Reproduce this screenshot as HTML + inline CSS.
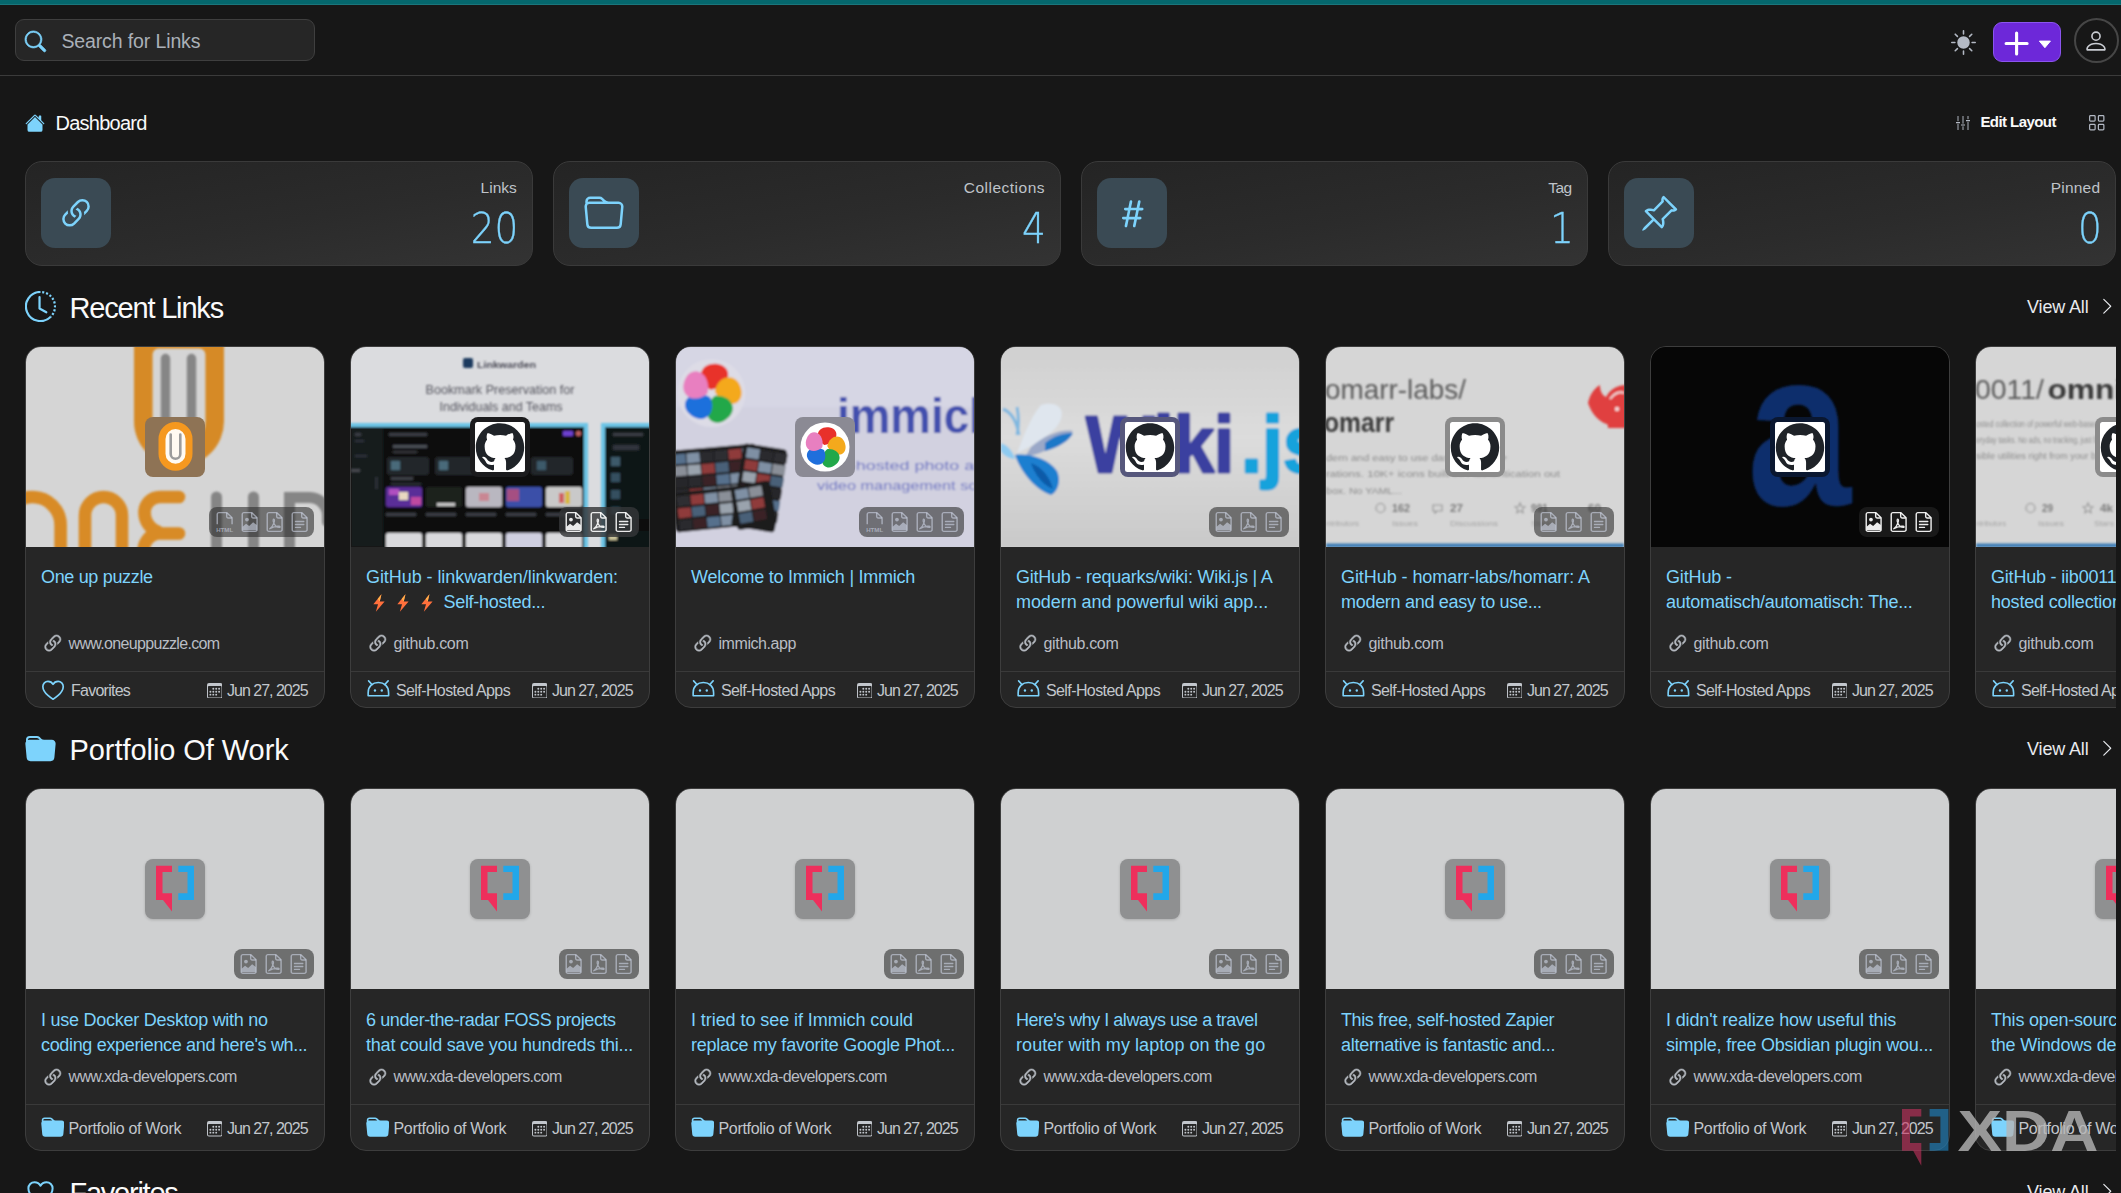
<!DOCTYPE html>
<html lang="en"><head><meta charset="utf-8"><title>Dashboard - Linkwarden</title>
<style>
html,body{margin:0;padding:0;background:#171717;}
body{width:2121px;height:1193px;overflow:hidden;position:relative;font-family:"Liberation Sans",sans-serif;}
#root{position:absolute;left:0;top:0;width:2121px;height:1193px;overflow:hidden;background:#171717;}
.a{position:absolute;display:block;}
.t{position:absolute;white-space:nowrap;line-height:1;}
.card{background:#262626;border:1px solid #3d3d3d;border-radius:16px;box-sizing:border-box;overflow:hidden;}
.num{font-family:"DejaVu Sans","Liberation Sans",sans-serif;font-weight:200;}
</style></head>
<body><div id="root">
<div class="a" style="left:0px;top:0px;width:2121px;height:4.6px;background:#05676d;"></div>
<div class="a" style="left:0px;top:4px;width:2121px;height:1px;background:#2b8489;opacity:.55;"></div>
<div class="a" style="left:15px;top:19px;width:300px;height:42px;background:#262626;border:1px solid #3f3f3f;border-radius:9px;box-sizing:border-box;"></div>
<svg class="a" style="left:24.6px;top:30.9px;overflow:visible;" width="20.8" height="20.8" viewBox="0 0 16 16"><g fill="#7dd3fc" stroke="#7dd3fc" stroke-width="0.55" stroke-linejoin="round"><path d="M11.742 10.344a6.5 6.5 0 1 0-1.397 1.398h-.001q.044.06.098.115l3.85 3.85a1 1 0 0 0 1.415-1.414l-3.85-3.85a1 1 0 0 0-.115-.1zM12 6.5a5.5 5.5 0 1 1-11 0 5.5 5.5 0 0 1 11 0"/></g></svg>
<span id="t0" class="t " style="top:32.39px;font-size:19.5px;color:#aab0b8;left:61.40px;letter-spacing:-0.120px;">Search for Links</span>
<div class="a" style="left:0px;top:75px;width:2121px;height:1px;background:#3b3b3b;"></div>
<svg class="a" style="left:1950.5px;top:30px;" width="25" height="25" viewBox="0 0 16 16"><g fill="#b3b9c4"><path d="M8 12a4 4 0 1 0 0-8 4 4 0 0 0 0 8M8 0a.5.5 0 0 1 .5.5v2a.5.5 0 0 1-1 0v-2A.5.5 0 0 1 8 0m0 13a.5.5 0 0 1 .5.5v2a.5.5 0 0 1-1 0v-2A.5.5 0 0 1 8 13m8-5a.5.5 0 0 1-.5.5h-2a.5.5 0 0 1 0-1h2a.5.5 0 0 1 .5.5M3 8a.5.5 0 0 1-.5.5h-2a.5.5 0 0 1 0-1h2A.5.5 0 0 1 3 8m10.657-5.657a.5.5 0 0 1 0 .707l-1.414 1.415a.5.5 0 1 1-.707-.708l1.414-1.414a.5.5 0 0 1 .707 0m-9.193 9.193a.5.5 0 0 1 0 .707L3.05 13.657a.5.5 0 0 1-.707-.707l1.414-1.414a.5.5 0 0 1 .707 0m9.193 2.121a.5.5 0 0 1-.707 0l-1.414-1.414a.5.5 0 0 1 .707-.707l1.414 1.414a.5.5 0 0 1 0 .707M4.464 4.465a.5.5 0 0 1-.707 0L2.343 3.05a.5.5 0 1 1 .707-.707l1.414 1.414a.5.5 0 0 1 0 .708"/></g></svg>
<div class="a" style="left:1993px;top:22px;width:68px;height:40px;background:#6d28d9;border:1px solid #8b55ee;border-radius:9px;box-sizing:border-box;"></div>
<svg class="a" style="left:2003px;top:30px;" width="50" height="26" viewBox="0 0 50 26"><path d="M3.100 13.500h21M13.600 3v21" stroke="#fff" stroke-width="3.100" stroke-linecap="round"/><path d="M36.400 11.100h11l-5.500 6.600z" fill="#fff" stroke="#fff" stroke-width="1" stroke-linejoin="round"/></svg>
<div class="a" style="left:2073.5px;top:17.5px;width:45px;height:45px;border:2px solid #464646;border-radius:50%;box-sizing:border-box;"></div>
<svg class="a" style="left:2083.3px;top:28.4px;" width="26" height="26" viewBox="0 0 16 16"><g fill="#c9ccd2"><path d="M8 8a3 3 0 1 0 0-6 3 3 0 0 0 0 6m2-3a2 2 0 1 1-4 0 2 2 0 0 1 4 0m4 8c0 1-1 1-1 1H3s-1 0-1-1 1-4 6-4 6 3 6 4m-1-.004c-.001-.246-.154-.986-.832-1.664C11.516 10.68 10.289 10 8 10s-3.516.68-4.168 1.332c-.678.678-.83 1.418-.832 1.664z"/></g></svg>
<svg class="a" style="left:25px;top:112.5px;" width="20" height="20" viewBox="0 0 16 16"><g fill="#7dd3fc"><path d="M8.707 1.5a1 1 0 0 0-1.414 0L.646 8.146a.5.5 0 0 0 .708.708L8 2.207l6.646 6.647a.5.5 0 0 0 .708-.708L13 5.793V2.5a.5.5 0 0 0-.5-.5h-1a.5.5 0 0 0-.5.5v1.293z"/><path d="m8 3.293 6 6V13.5a1.5 1.5 0 0 1-1.500 1.500h-9A1.500 1.500 0 0 1 2 13.500V9.293z"/></g></svg>
<span id="t1" class="t " style="top:112.57px;font-size:20px;color:#fafafa;left:55.50px;letter-spacing:-0.750px;">Dashboard</span>
<svg class="a" style="left:1954.5px;top:114.5px;" width="16" height="16" viewBox="0 0 16 16"><g stroke="#b3b9c4" stroke-width=".95" fill="none" stroke-linecap="butt"><path d="M3 1v5.2M3 8.8V15M8 1v7.7M8 11.3V15M13 1v3.2M13 6.8V15"/><path d="M1 7.6h4M6 10h4M11 5.600h4" stroke-width="1.2"/></g></svg>
<span id="t2" class="t " style="top:114.30px;font-size:15px;color:#fafafa;left:1980.40px;font-weight:700;letter-spacing:-0.560px;">Edit Layout</span>
<svg class="a" style="left:2087.5px;top:113.5px;" width="17.5" height="17.5" viewBox="0 0 16 16"><g stroke="#b3b9c4" stroke-width="1.1" fill="none"><rect x="1.5" y="1.5" width="5" height="5" rx=".8"/><rect x="9.5" y="1.5" width="5" height="5" rx=".8"/><rect x="1.5" y="9.5" width="5" height="5" rx=".8"/><rect x="9.5" y="9.5" width="5" height="5" rx=".8"/></g></svg>
<div class="a" style="left:25px;top:161px;width:507.75px;height:104.5px;background:linear-gradient(170deg,#242424 0%,#2b2b2b 55%,#333 100%);border:1px solid #3a3a3a;border-radius:17px;box-sizing:border-box;"></div>
<div class="a" style="left:41px;top:178px;width:70px;height:70px;background:#3a4a54;border-radius:14px;"></div>
<svg class="a" style="left:56.2px;top:194px;" width="40" height="40" viewBox="0 0 16 16"><g fill="#7dd3fc"><path d="M4.715 6.542 3.343 7.914a3 3 0 1 0 4.243 4.243l1.828-1.829A3 3 0 0 0 8.586 5.5L8 6.086a1 1 0 0 0-.154.199 2 2 0 0 1 .861 3.337L6.880 11.450a2 2 0 1 1-2.830-2.830l.793-.792a4 4 0 0 1-.128-1.287z"/><path d="M6.586 4.672A3 3 0 0 0 7.414 9.500l.775-.776a2 2 0 0 1-.896-3.346L9.120 3.550a2 2 0 1 1 2.830 2.830l-.793.792c.112.420.155.855.128 1.287l1.372-1.372a3 3 0 1 0-4.243-4.243z"/></g></svg>
<span id="t3" class="t " style="top:179.88px;font-size:15.5px;color:#bfc3c9;right:1604.25px;">Links</span>
<span id="t4" class="t num" style="top:207.18px;font-size:43.5px;color:#7dd3fc;right:1602.75px;transform:scaleX(.86);-webkit-text-stroke:.35px #7dd3fc;transform-origin:100% 50%;">20</span>
<div class="a" style="left:552.75px;top:161px;width:507.75px;height:104.5px;background:linear-gradient(170deg,#242424 0%,#2b2b2b 55%,#333 100%);border:1px solid #3a3a3a;border-radius:17px;box-sizing:border-box;"></div>
<div class="a" style="left:568.75px;top:178px;width:70px;height:70px;background:#3a4a54;border-radius:14px;"></div>
<svg class="a" style="left:583.95px;top:194px;" width="40" height="40" viewBox="0 0 16 16"><g fill="#7dd3fc"><path d="M.54 3.87.5 3a2 2 0 0 1 2-2h3.672a2 2 0 0 1 1.414.586l.828.828A2 2 0 0 0 9.828 3h3.982a2 2 0 0 1 1.992 2.181l-.637 7A2 2 0 0 1 13.174 14H2.826a2 2 0 0 1-1.991-1.819l-.637-7a2 2 0 0 1 .342-1.310zM2.190 4a1 1 0 0 0-.996 1.090l.637 7a1 1 0 0 0 .995.910h10.348a1 1 0 0 0 .995-.910l.637-7A1 1 0 0 0 13.810 4zm4.690-1.707A1 1 0 0 0 6.172 2H2.500a1 1 0 0 0-1 .981l.006.139q.323-.119.684-.120h5.396z"/></g></svg>
<span id="t5" class="t " style="top:179.88px;font-size:15.5px;color:#bfc3c9;right:1076.00px;letter-spacing:0.500px;">Collections</span>
<span id="t6" class="t num" style="top:207.18px;font-size:43.5px;color:#7dd3fc;right:1075.00px;transform:scaleX(.86);-webkit-text-stroke:.35px #7dd3fc;transform-origin:100% 50%;">4</span>
<div class="a" style="left:1080.5px;top:161px;width:507.75px;height:104.5px;background:linear-gradient(170deg,#242424 0%,#2b2b2b 55%,#333 100%);border:1px solid #3a3a3a;border-radius:17px;box-sizing:border-box;"></div>
<div class="a" style="left:1096.5px;top:178px;width:70px;height:70px;background:#3a4a54;border-radius:14px;"></div>
<svg class="a" style="left:1111.7px;top:194px;" width="40" height="40" viewBox="0 0 16 16"><g fill="#7dd3fc"><path d="M8.390 12.648a1 1 0 0 0-.015.180c0 .305.210.508.500.508.266 0 .492-.172.555-.477l.554-2.703h1.204c.421 0 .617-.234.617-.547 0-.312-.188-.530-.617-.530h-.985l.516-2.524h1.265c.430 0 .618-.227.618-.547 0-.313-.188-.524-.618-.524h-1.046l.476-2.304a1 1 0 0 0 .016-.164.510.510 0 0 0-.516-.516.540.540 0 0 0-.539.430l-.523 2.554H7.617l.477-2.304c.008-.040.015-.118.015-.164a.510.510 0 0 0-.523-.516.540.540 0 0 0-.531.430L6.530 5.484H5.414c-.430 0-.617.220-.617.532s.187.539.617.539h.906l-.515 2.523H4.609c-.421 0-.609.219-.609.531s.188.547.610.547h.976l-.516 2.492c-.008.040-.015.125-.015.180 0 .305.210.508.500.508.265 0 .492-.172.554-.477l.555-2.703h2.242zm-1-6.109h2.266l-.515 2.563H6.859l.532-2.563z"/></g></svg>
<span id="t7" class="t " style="top:179.88px;font-size:15.5px;color:#bfc3c9;right:549.25px;letter-spacing:-0.500px;">Tag</span>
<span id="t8" class="t num" style="top:207.18px;font-size:43.5px;color:#7dd3fc;right:547.25px;transform:scaleX(.86);-webkit-text-stroke:.35px #7dd3fc;transform-origin:100% 50%;">1</span>
<div class="a" style="left:1608.25px;top:161px;width:507.75px;height:104.5px;background:linear-gradient(170deg,#242424 0%,#2b2b2b 55%,#333 100%);border:1px solid #3a3a3a;border-radius:17px;box-sizing:border-box;"></div>
<div class="a" style="left:1624.25px;top:178px;width:70px;height:70px;background:#3a4a54;border-radius:14px;"></div>
<svg class="a" style="left:1639.45px;top:194px;" width="40" height="40" viewBox="0 0 16 16"><g fill="#7dd3fc"><path d="M9.828.722a.5.5 0 0 1 .354.146l4.950 4.950a.5.5 0 0 1 0 .707c-.480.480-1.072.588-1.503.588-.177 0-.335-.018-.460-.039l-3.134 3.134a6 6 0 0 1 .160 1.013c.046.702-.032 1.687-.720 2.375a.5.5 0 0 1-.707 0l-2.829-2.828-3.182 3.182c-.195.195-1.219.902-1.414.707s.512-1.220.707-1.414l3.182-3.182-2.828-2.829a.5.5 0 0 1 0-.707c.688-.688 1.673-.767 2.375-.720a6 6 0 0 1 1.013.160l3.134-3.133a3 3 0 0 1-.040-.461c0-.430.108-1.022.589-1.503a.5.5 0 0 1 .353-.146m.122 2.112v-.002zm0-.002v.002a.5.5 0 0 1-.122.510L6.293 6.878a.5.5 0 0 1-.511.120H5.780l-.014-.004a5 5 0 0 0-.288-.076 5 5 0 0 0-.765-.116c-.422-.028-.836.008-1.175.150l5.510 5.509c.141-.340.177-.753.149-1.175a5 5 0 0 0-.192-1.054l-.004-.013v-.001a.5.5 0 0 1 .120-.512l3.536-3.535a.5.5 0 0 1 .532-.115l.096.022c.087.017.208.034.344.034q.172.002.343-.040L9.927 2.028q-.042.172-.040.343a1.800 1.800 0 0 0 .062.460z"/></g></svg>
<span id="t9" class="t " style="top:179.88px;font-size:15.5px;color:#bfc3c9;right:20.80px;letter-spacing:0.200px;">Pinned</span>
<span id="t10" class="t num" style="top:207.18px;font-size:43.5px;color:#7dd3fc;right:19.50px;transform:scaleX(.86);-webkit-text-stroke:.35px #7dd3fc;transform-origin:100% 50%;">0</span>
<svg class="a" style="left:24.5px;top:291px;" width="31" height="31" viewBox="0 0 16 16"><g fill="none" stroke="#7dd3fc" stroke-width="1.150" stroke-linecap="butt"><path d="M8 .5A7.500 7.500 0 1 0 13.300 13.300"/><path d="M8 .5A7.500 7.500 0 0 1 13.300 13.300" stroke-dasharray="1.05 1.0" stroke-dashoffset="-0.9"/><path d="M7.500 3.200V9l3.500 2" stroke-linecap="round" stroke-linejoin="round"/></g></svg>
<span id="t11" class="t " style="top:294.45px;font-size:29px;color:#fafafa;left:69.50px;letter-spacing:-1.182px;">Recent Links</span>
<span id="t12" class="t " style="top:297.51px;font-size:18px;color:#e8eaee;left:2027.00px;letter-spacing:-0.142px;">View All</span>
<svg class="a" style="left:2098.3px;top:297.3px;" width="18.5" height="18.5" viewBox="0 0 16 16"><g fill="#e8eaee"><path d="M4.646 1.646a.5.5 0 0 1 .708 0l6 6a.5.5 0 0 1 0 .708l-6 6a.5.5 0 0 1-.708-.708L10.293 8 4.646 2.354a.5.5 0 0 1 0-.708"/></g></svg>
<svg class="a" style="left:24.6px;top:733.8px;" width="31" height="31" viewBox="0 0 16 16"><g fill="#7dd3fc"><path d="M9.828 3h3.982a2 2 0 0 1 1.992 2.181l-.637 7A2 2 0 0 1 13.174 14H2.825a2 2 0 0 1-1.991-1.819l-.637-7a2 2 0 0 1 .342-1.310L.5 3a2 2 0 0 1 2-2h3.672a2 2 0 0 1 1.414.586l.828.828A2 2 0 0 0 9.828 3m-8.322.120q.322-.119.684-.120h5.396l-.707-.707A1 1 0 0 0 6.172 2H2.500a1 1 0 0 0-1 .981z"/></g></svg>
<span id="t13" class="t " style="top:736.45px;font-size:29px;color:#fafafa;left:69.50px;letter-spacing:-0.062px;">Portfolio Of Work</span>
<span id="t14" class="t " style="top:739.51px;font-size:18px;color:#e8eaee;left:2027.00px;letter-spacing:-0.142px;">View All</span>
<svg class="a" style="left:2098.3px;top:739.3px;" width="18.5" height="18.5" viewBox="0 0 16 16"><g fill="#e8eaee"><path d="M4.646 1.646a.5.5 0 0 1 .708 0l6 6a.5.5 0 0 1 0 .708l-6 6a.5.5 0 0 1-.708-.708L10.293 8 4.646 2.354a.5.5 0 0 1 0-.708"/></g></svg>
<svg class="a" style="left:24.6px;top:1176.5px;" width="31" height="31" viewBox="0 0 32 32"><path d="M16 27.200C16 27.200 3.500 20.300 3.500 11.700A6.300 6.300 0 0 1 9.800 5.400c2.700 0 5 1.400 6.200 3.600 1.200-2.200 3.500-3.600 6.200-3.600a6.300 6.300 0 0 1 6.300 6.300C28.500 20.300 16 27.200 16 27.200z" fill="none" stroke="#7dd3fc" stroke-width="2.050" stroke-linejoin="round"/></svg>
<span id="t15" class="t " style="top:1179.45px;font-size:29px;color:#fafafa;left:69.50px;letter-spacing:-1.250px;">Favorites</span>
<span id="t16" class="t " style="top:1182.51px;font-size:18px;color:#e8eaee;left:2027.00px;letter-spacing:-0.142px;">View All</span>
<svg class="a" style="left:2098.3px;top:1182.3px;" width="18.5" height="18.5" viewBox="0 0 16 16"><g fill="#e8eaee"><path d="M4.646 1.646a.5.5 0 0 1 .708 0l6 6a.5.5 0 0 1 0 .708l-6 6a.5.5 0 0 1-.708-.708L10.293 8 4.646 2.354a.5.5 0 0 1 0-.708"/></g></svg>
<div class="a card" style="left:25px;top:346px;width:300px;height:361.5px;"><div class="a" style="left:0;top:0;width:298px;height:200px;overflow:hidden;"><svg width="298" height="200" viewBox="0 0 298 200" style="display:block;background:#d5d5d5"><defs><filter id="b1" x="-5%" y="-5%" width="110%" height="110%"><feGaussianBlur stdDeviation="1"/></filter></defs><g filter="url(#b1)"><path fill-rule="evenodd" fill="#d68a25" d="M108-20H198V74.300A45 45 0 0 1 108 74.300ZM132.600 1.500A6 6 0 0 0 126.600 7.500V74.200A26.400 26.400 0 0 0 179.400 74.200V7.500A6 6 0 0 0 173.400 1.500Z"/><path d="M139.500 11.500v80M165.500 11.500v80" stroke="#868686" stroke-width="9.400" stroke-linecap="round"/><g fill="none" stroke="#d88b26" stroke-width="12.600" stroke-linecap="round" stroke-linejoin="round"><path d="M-21.400 215v-37a28 28 0 0 1 56 0v37"/><path d="M59 215v-46.500a18.500 18.500 0 0 1 37 0v46.500"/><path d="M153 150h-19a15.500 15.500 0 0 0-15.500 15.500c0 9 6 17 14 19.500M153 186.500h-22c-9 2-13.500 10-13.500 18v12"/></g><g fill="none" stroke="#858585" stroke-width="11" stroke-linecap="round"><path d="M190.500 150v62M227.500 150v62M263.500 215v-64.500h20a18 18 0 0 1 18 18v6"/></g></g></svg></div></div>
<div class="a" style="left:145px;top:416.5px;width:60px;height:60px;border-radius:8px;background:#8e7355;"><svg class="a" style="left:5px;top:5px" width="50" height="50" viewBox="0 0 50 50"><rect x="12" y="3.500" width="27" height="41.700" rx="13.500" fill="#fffaf2" stroke="#f5981f" stroke-width="7"/><path d="M20.700 12.500v19.500a4.800 4.800 0 0 0 9.600 0V12.500" fill="none" stroke="#9c9c9c" stroke-width="2.600" stroke-linecap="round"/></svg></div>
<div class="a" style="left:209.4px;top:506.9px;width:104.5px;height:29.8px;background:rgba(43,43,43,.59);border-radius:8px;"></div>
<svg class="a" style="left:214.8px;top:511.2px;" width="19.3" height="22" viewBox="0 0 17.500 20"><path d="M3.500 1.500h7.300l4.700 4.700V12M2 12V3a1.500 1.500 0 0 1 1.500-1.500" fill="none" stroke="rgba(215,222,240,.55)" stroke-width="1.300" stroke-linejoin="round"/><path d="M10.600 1.700v3.400a1.200 1.200 0 0 0 1.200 1.200h3.500" fill="none" stroke="rgba(215,222,240,.55)" stroke-width="1.300"/><text x="8.800" y="19.300" text-anchor="middle" font-family="Liberation Sans, sans-serif" font-size="5.600" font-weight="700" fill="rgba(215,222,240,.55)" textLength="15.500" lengthAdjust="spacingAndGlyphs">HTML</text></svg>
<svg class="a" style="left:239.8px;top:511.2px;" width="19.3" height="22" viewBox="0 0 17.500 20"><path d="M3.500 1.500h7.300l4.700 4.700V17a1.500 1.500 0 0 1-1.500 1.500h-10.500A1.500 1.500 0 0 1 2 17V3a1.500 1.500 0 0 1 1.500-1.500z" fill="none" stroke="rgba(215,222,240,.55)" stroke-width="1.300" stroke-linejoin="round"/><path d="M10.600 1.700v3.400a1.200 1.200 0 0 0 1.200 1.200h3.500" fill="none" stroke="rgba(215,222,240,.55)" stroke-width="1.300"/><circle cx="6.300" cy="7.800" r="1.700" fill="rgba(215,222,240,.55)"/><path d="M2.300 17.600v-3.300l3.200-2.700 2.800 2 3.600-3.400 3.400 2.600v4.800z" fill="rgba(215,222,240,.55)"/></svg>
<svg class="a" style="left:264.8px;top:511.2px;" width="19.3" height="22" viewBox="0 0 17.500 20"><path d="M3.500 1.500h7.300l4.700 4.700V17a1.500 1.500 0 0 1-1.500 1.500h-10.500A1.500 1.500 0 0 1 2 17V3a1.500 1.500 0 0 1 1.500-1.500z" fill="none" stroke="rgba(215,222,240,.55)" stroke-width="1.300" stroke-linejoin="round"/><path d="M10.600 1.700v3.400a1.200 1.200 0 0 0 1.200 1.200h3.500" fill="none" stroke="rgba(215,222,240,.55)" stroke-width="1.300"/><path d="M4.300 16.200c1.500-1 3.200-3.700 4-6 .5-1.500.4-2.900-.3-2.900s-.9 1.300-.3 2.900c.8 2.200 2.900 4.600 5.300 4.700 1 .05 1-.9 0-1.100-2-.4-6 .700-8.700 2.400z" fill="none" stroke="rgba(215,222,240,.55)" stroke-width="1.100" stroke-linejoin="round"/></svg>
<svg class="a" style="left:289.8px;top:511.2px;" width="19.3" height="22" viewBox="0 0 17.500 20"><path d="M3.500 1.500h7.300l4.700 4.700V17a1.500 1.500 0 0 1-1.500 1.500h-10.500A1.500 1.500 0 0 1 2 17V3a1.500 1.500 0 0 1 1.500-1.500z" fill="none" stroke="rgba(215,222,240,.55)" stroke-width="1.300" stroke-linejoin="round"/><path d="M10.600 1.700v3.400a1.200 1.200 0 0 0 1.200 1.200h3.500" fill="none" stroke="rgba(215,222,240,.55)" stroke-width="1.300"/><path d="M5 9.500h7.500M5 12.200h7.500M5 14.900h4.500" stroke="rgba(215,222,240,.55)" stroke-width="1.300" stroke-linecap="round"/></svg>
<span id="t17" class="t " style="top:568.26px;font-size:18px;color:#7dd3fc;left:41.00px;letter-spacing:-0.333px;">One up puzzle</span>
<svg class="a" style="left:40.7px;top:632.1px;" width="23.6" height="23.6" viewBox="0 0 16 16"><g fill="#b4b8bf" stroke="#b4b8bf" stroke-width="0.35" stroke-linejoin="round"><path d="M4.715 6.542 3.343 7.914a3 3 0 1 0 4.243 4.243l1.828-1.829A3 3 0 0 0 8.586 5.5L8 6.086a1 1 0 0 0-.154.199 2 2 0 0 1 .861 3.337L6.880 11.450a2 2 0 1 1-2.830-2.830l.793-.792a4 4 0 0 1-.128-1.287z"/><path d="M6.586 4.672A3 3 0 0 0 7.414 9.500l.775-.776a2 2 0 0 1-.896-3.346L9.120 3.550a2 2 0 1 1 2.830 2.830l-.793.792c.112.420.155.855.128 1.287l1.372-1.372a3 3 0 1 0-4.243-4.243z"/></g></svg>
<span id="t18" class="t " style="top:635.96px;font-size:16px;color:#b9bdc4;left:68.50px;letter-spacing:-0.667px;">www.oneuppuzzle.com</span>
<div class="a" style="left:26px;top:671px;width:298px;height:1px;background:#3a3a3a;"></div>
<svg class="a" style="left:40.25px;top:677.1px;" width="26.1" height="26.1" viewBox="0 0 32 32"><path d="M16 27.200C16 27.200 3.500 20.300 3.500 11.700A6.300 6.300 0 0 1 9.800 5.400c2.700 0 5 1.400 6.200 3.600 1.200-2.200 3.500-3.600 6.200-3.600a6.300 6.300 0 0 1 6.300 6.300C28.500 20.300 16 27.200 16 27.200z" fill="none" stroke="#7dd3fc" stroke-width="2.050" stroke-linejoin="round"/></svg>
<span id="t19" class="t " style="top:682.96px;font-size:16px;color:#c2c6cc;left:71.00px;letter-spacing:-0.750px;">Favorites</span>
<svg class="a" style="left:206.5px;top:682.5px;" width="15.5" height="15.5" viewBox="0 0 16 16"><g fill="#c2c6cc"><path d="M14 0H2a2 2 0 0 0-2 2v12a2 2 0 0 0 2 2h12a2 2 0 0 0 2-2V2a2 2 0 0 0-2-2M1 3.857C1 3.384 1.448 3 2 3h12c.552 0 1 .384 1 .857v10.286c0 .473-.448.857-1 .857H2c-.552 0-1-.384-1-.857z"/><path d="M6.500 7a1 1 0 1 0 0-2 1 1 0 0 0 0 2m3 0a1 1 0 1 0 0-2 1 1 0 0 0 0 2m3 0a1 1 0 1 0 0-2 1 1 0 0 0 0 2m-9 3a1 1 0 1 0 0-2 1 1 0 0 0 0 2m3 0a1 1 0 1 0 0-2 1 1 0 0 0 0 2m3 0a1 1 0 1 0 0-2 1 1 0 0 0 0 2m3 0a1 1 0 1 0 0-2 1 1 0 0 0 0 2m-9 3a1 1 0 1 0 0-2 1 1 0 0 0 0 2m3 0a1 1 0 1 0 0-2 1 1 0 0 0 0 2m3 0a1 1 0 1 0 0-2 1 1 0 0 0 0 2"/></g></svg>
<span id="t20" class="t " style="top:682.96px;font-size:16px;color:#c2c6cc;left:227.00px;letter-spacing:-1.000px;">Jun 27, 2025</span>
<div class="a card" style="left:350px;top:346px;width:300px;height:361.5px;"><div class="a" style="left:0;top:0;width:298px;height:200px;overflow:hidden;"><svg width="298" height="200" viewBox="0 0 298 200" style="display:block;background:#dbdcdf"><defs><filter id="b2" x="-5%" y="-5%" width="110%" height="110%"><feGaussianBlur stdDeviation="1.15"/></filter></defs><g filter="url(#b2)"><rect x="112" y="11" width="10" height="10" rx="2" fill="#1c3a5e"/><text x="126" y="20.500" font-family="Liberation Sans, sans-serif" font-size="9.500" font-weight="700" fill="#4a4a55" textLength="59" lengthAdjust="spacingAndGlyphs">Linkwarden</text><text x="149" y="47" font-family="Liberation Sans, sans-serif" font-size="12.200" fill="#55555e" text-anchor="middle" textLength="149" lengthAdjust="spacingAndGlyphs">Bookmark Preservation for</text><text x="150" y="63.500" font-family="Liberation Sans, sans-serif" font-size="12.200" fill="#55555e" text-anchor="middle" textLength="123" lengthAdjust="spacingAndGlyphs">Individuals and Teams</text><rect x="-6" y="78" width="241" height="140" fill="#0d0e10" stroke="#6cc4e6" stroke-width="4"/><rect x="252" y="78" width="60" height="140" fill="#111214" stroke="#6cc4e6" stroke-width="4"/><rect x="0" y="80" width="32" height="120" fill="#191a1d"/><rect x="38" y="86" width="38" height="3" fill="#3a3d44"/><rect x="42" y="98" width="34" height="3" fill="#4a4d55"/><rect x="42" y="104" width="24" height="2" fill="#34373d"/><rect x="36" y="110" width="42" height="18" rx="3" fill="#23262c"/><rect x="84" y="110" width="42" height="18" rx="3" fill="#23262c"/><rect x="132" y="110" width="42" height="18" rx="3" fill="#23262c"/><rect x="180" y="110" width="42" height="18" rx="3" fill="#23262c"/><rect x="40" y="114" width="9" height="9" fill="#4a6a7a"/><rect x="88" y="114" width="9" height="9" fill="#4a6a7a"/><rect x="186" y="114" width="9" height="9" fill="#3d5a6a"/><rect x="212" y="84" width="10" height="5" rx="1" fill="#6d3fd0"/><rect x="225" y="84" width="5" height="5" rx="2" fill="#c06060"/><rect x="4" y="86" width="6" height="3" fill="#3a3d44"/><rect x="4" y="93" width="9" height="2" fill="#33363c"/><rect x="4" y="108" width="12" height="2" fill="#33363c"/><rect x="0" y="122" width="9" height="3" fill="#44474e"/><rect x="24" y="130" width="3" height="12" fill="#2c2f35"/><rect x="40" y="130" width="22" height="3" fill="#3d4047"/><rect x="40" y="136" width="30" height="2" fill="#2f3238"/><rect x="35" y="140" width="36" height="20" rx="2" fill="#5a2f98"/><rect x="35" y="166" width="30" height="3" fill="#3a3d44"/><rect x="35" y="186" width="36" height="16" rx="2" fill="#d9d9dc"/><rect x="75" y="140" width="36" height="20" rx="2" fill="#1d211d"/><rect x="75" y="166" width="30" height="3" fill="#3a3d44"/><rect x="75" y="186" width="36" height="16" rx="2" fill="#d9d9dc"/><rect x="115" y="140" width="36" height="20" rx="2" fill="#b9b7c0"/><rect x="115" y="166" width="30" height="3" fill="#3a3d44"/><rect x="115" y="186" width="36" height="16" rx="2" fill="#d9d9dc"/><rect x="155" y="140" width="36" height="20" rx="2" fill="#3b4fa8"/><rect x="155" y="166" width="30" height="3" fill="#3a3d44"/><rect x="155" y="186" width="36" height="16" rx="2" fill="#cfcfe0"/><rect x="195" y="140" width="36" height="20" rx="2" fill="#c9c9c9"/><rect x="195" y="166" width="30" height="3" fill="#3a3d44"/><rect x="195" y="186" width="36" height="16" rx="2" fill="#d9d9dc"/><rect x="48" y="145" width="9" height="8" fill="#e8d8c0"/><rect x="38" y="142" width="10" height="6" fill="#b050c0"/><rect x="60" y="150" width="10" height="8" fill="#c048a0"/><rect x="128" y="146" width="10" height="8" fill="#d07080" opacity=".7"/><rect x="156" y="142" width="12" height="12" fill="#c05078" opacity=".8"/><rect x="86" y="156" width="18" height="3" fill="#c8c8c8"/><rect x="214" y="144" width="5" height="13" fill="#d8b840"/><rect x="208" y="146" width="5" height="10" fill="#d06060"/><rect x="262" y="86" width="30" height="3" fill="#3a3d44"/><rect x="262" y="98" width="26" height="5" fill="#33363c"/><rect x="260" y="110" width="9" height="9" fill="#3d5a6a"/><rect x="260" y="126" width="9" height="9" fill="#34505e"/><rect x="260" y="143" width="9" height="9" fill="#34505e"/><rect x="260" y="160" width="9" height="7" fill="#2f4652"/><rect x="258" y="188" width="8" height="5" fill="#c9c39a"/><rect x="285" y="172" width="14" height="12" fill="#0d0d0f"/></g></svg></div></div>
<div class="a" style="left:470px;top:416.5px;width:60px;height:60px;border-radius:8px;background:#1b1b1d;"><svg class="a" style="left:5px;top:5px" width="50" height="50" viewBox="0 0 50 50"><rect width="50" height="50" rx="2.500" fill="#fff"/><g transform="translate(.8 1.200) scale(3.025)"><path d="M8 0C3.580 0 0 3.580 0 8c0 3.540 2.290 6.530 5.470 7.590.4.070.550-.170.550-.380 0-.190-.010-.820-.010-1.490-2.010.370-2.530-.490-2.690-.940-.090-.230-.480-.940-.820-1.130-.280-.150-.680-.520-.010-.530.630-.010 1.080.580 1.230.820.720 1.210 1.870.870 2.330.660.070-.520.280-.870.510-1.070-1.780-.2-3.640-.890-3.640-3.950 0-.870.310-1.590.820-2.150-.080-.2-.360-1.020.080-2.120 0 0 .670-.210 2.200.820.640-.180 1.320-.270 2-.270s1.360.090 2 .270c1.530-1.040 2.200-.820 2.200-.820.440 1.100.160 1.920.080 2.120.510.560.820 1.270.820 2.150 0 3.070-1.870 3.750-3.650 3.950.290.250.540.730.540 1.480 0 1.070-.010 1.930-.010 2.200 0 .210.150.460.550.380A8.010 8.010 0 0 0 16 8c0-4.420-3.580-8-8-8" fill="#1f2328"/></g></svg></div>
<div class="a" style="left:558.9px;top:506.9px;width:80px;height:29.8px;background:rgba(52,54,56,.82);border-radius:8px;"></div>
<svg class="a" style="left:564.3px;top:511.2px;" width="19.3" height="22" viewBox="0 0 17.500 20"><path d="M3.500 1.500h7.300l4.700 4.700V17a1.500 1.500 0 0 1-1.500 1.500h-10.500A1.500 1.500 0 0 1 2 17V3a1.500 1.500 0 0 1 1.500-1.500z" fill="none" stroke="rgba(255,255,255,.9)" stroke-width="1.300" stroke-linejoin="round"/><path d="M10.600 1.700v3.400a1.200 1.200 0 0 0 1.200 1.200h3.500" fill="none" stroke="rgba(255,255,255,.9)" stroke-width="1.300"/><circle cx="6.300" cy="7.800" r="1.700" fill="rgba(255,255,255,.9)"/><path d="M2.300 17.600v-3.300l3.200-2.700 2.800 2 3.600-3.400 3.400 2.600v4.800z" fill="rgba(255,255,255,.9)"/></svg>
<svg class="a" style="left:589.3px;top:511.2px;" width="19.3" height="22" viewBox="0 0 17.500 20"><path d="M3.500 1.500h7.300l4.700 4.700V17a1.500 1.500 0 0 1-1.500 1.500h-10.500A1.500 1.500 0 0 1 2 17V3a1.500 1.500 0 0 1 1.500-1.500z" fill="none" stroke="rgba(255,255,255,.9)" stroke-width="1.300" stroke-linejoin="round"/><path d="M10.600 1.700v3.400a1.200 1.200 0 0 0 1.200 1.200h3.500" fill="none" stroke="rgba(255,255,255,.9)" stroke-width="1.300"/><path d="M4.300 16.200c1.500-1 3.200-3.700 4-6 .5-1.500.4-2.900-.3-2.900s-.9 1.300-.3 2.900c.8 2.200 2.900 4.600 5.300 4.700 1 .05 1-.9 0-1.100-2-.4-6 .700-8.700 2.400z" fill="none" stroke="rgba(255,255,255,.9)" stroke-width="1.100" stroke-linejoin="round"/></svg>
<svg class="a" style="left:614.3px;top:511.2px;" width="19.3" height="22" viewBox="0 0 17.500 20"><path d="M3.500 1.500h7.300l4.700 4.700V17a1.500 1.500 0 0 1-1.500 1.500h-10.500A1.500 1.500 0 0 1 2 17V3a1.500 1.500 0 0 1 1.500-1.500z" fill="none" stroke="rgba(255,255,255,.9)" stroke-width="1.300" stroke-linejoin="round"/><path d="M10.600 1.700v3.400a1.200 1.200 0 0 0 1.200 1.200h3.500" fill="none" stroke="rgba(255,255,255,.9)" stroke-width="1.300"/><path d="M5 9.500h7.500M5 12.200h7.500M5 14.900h4.500" stroke="rgba(255,255,255,.9)" stroke-width="1.300" stroke-linecap="round"/></svg>
<span id="t21" class="t " style="top:568.26px;font-size:18px;color:#7dd3fc;left:366.00px;letter-spacing:-0.067px;">GitHub - linkwarden/linkwarden:</span>
<span id="t22" class="t " style="top:593.26px;font-size:18px;color:#7dd3fc;left:443.50px;letter-spacing:-0.308px;">Self-hosted...</span>
<svg class="a" style="left:365.7px;top:632.1px;" width="23.6" height="23.6" viewBox="0 0 16 16"><g fill="#b4b8bf" stroke="#b4b8bf" stroke-width="0.35" stroke-linejoin="round"><path d="M4.715 6.542 3.343 7.914a3 3 0 1 0 4.243 4.243l1.828-1.829A3 3 0 0 0 8.586 5.5L8 6.086a1 1 0 0 0-.154.199 2 2 0 0 1 .861 3.337L6.880 11.450a2 2 0 1 1-2.830-2.830l.793-.792a4 4 0 0 1-.128-1.287z"/><path d="M6.586 4.672A3 3 0 0 0 7.414 9.500l.775-.776a2 2 0 0 1-.896-3.346L9.120 3.550a2 2 0 1 1 2.830 2.830l-.793.792c.112.420.155.855.128 1.287l1.372-1.372a3 3 0 1 0-4.243-4.243z"/></g></svg>
<span id="t23" class="t " style="top:635.96px;font-size:16px;color:#b9bdc4;left:393.50px;letter-spacing:-0.334px;">github.com</span>
<div class="a" style="left:351px;top:671px;width:298px;height:1px;background:#3a3a3a;"></div>
<svg class="a" style="left:367.25px;top:680.2px;" width="22.75" height="16.6833" viewBox="0 0 24 17.600"><g fill="none" stroke="#7dd3fc" stroke-width="1.700" stroke-linecap="round" stroke-linejoin="round"><path d="M1.200 16.600V13.400C1.200 6.600 6 2.700 12 2.700s10.800 3.900 10.800 10.700v3.200z"/><path d="M1.700 .900l3.500 3.900M22.300 .900l-3.500 3.900"/></g><circle cx="8.400" cy="11.100" r="1.250" fill="#7dd3fc"/><circle cx="15.600" cy="11.100" r="1.250" fill="#7dd3fc"/></svg>
<span id="t24" class="t " style="top:682.96px;font-size:16px;color:#c2c6cc;left:396.00px;letter-spacing:-0.600px;">Self-Hosted Apps</span>
<svg class="a" style="left:531.5px;top:682.5px;" width="15.5" height="15.5" viewBox="0 0 16 16"><g fill="#c2c6cc"><path d="M14 0H2a2 2 0 0 0-2 2v12a2 2 0 0 0 2 2h12a2 2 0 0 0 2-2V2a2 2 0 0 0-2-2M1 3.857C1 3.384 1.448 3 2 3h12c.552 0 1 .384 1 .857v10.286c0 .473-.448.857-1 .857H2c-.552 0-1-.384-1-.857z"/><path d="M6.500 7a1 1 0 1 0 0-2 1 1 0 0 0 0 2m3 0a1 1 0 1 0 0-2 1 1 0 0 0 0 2m3 0a1 1 0 1 0 0-2 1 1 0 0 0 0 2m-9 3a1 1 0 1 0 0-2 1 1 0 0 0 0 2m3 0a1 1 0 1 0 0-2 1 1 0 0 0 0 2m3 0a1 1 0 1 0 0-2 1 1 0 0 0 0 2m3 0a1 1 0 1 0 0-2 1 1 0 0 0 0 2m-9 3a1 1 0 1 0 0-2 1 1 0 0 0 0 2m3 0a1 1 0 1 0 0-2 1 1 0 0 0 0 2m3 0a1 1 0 1 0 0-2 1 1 0 0 0 0 2"/></g></svg>
<span id="t25" class="t " style="top:682.96px;font-size:16px;color:#c2c6cc;left:552.00px;letter-spacing:-1.000px;">Jun 27, 2025</span>
<svg class="a" style="left:371.5px;top:593.5px;" width="13.5" height="18" viewBox="0 0 15 20"><path d="M10.500 .3 1.500 11.400h5.200L4.300 19.800 14 8.200H8.600z" fill="#ff6f3c"/><path d="M10.500 .3 6.300 5.600 8.600 8.200z" fill="#ffb04a"/></svg>
<svg class="a" style="left:395.5px;top:593.5px;" width="13.5" height="18" viewBox="0 0 15 20"><path d="M10.500 .3 1.500 11.400h5.200L4.300 19.800 14 8.200H8.600z" fill="#ff6f3c"/><path d="M10.500 .3 6.300 5.600 8.600 8.200z" fill="#ffb04a"/></svg>
<svg class="a" style="left:419.5px;top:593.5px;" width="13.5" height="18" viewBox="0 0 15 20"><path d="M10.500 .3 1.500 11.400h5.200L4.300 19.800 14 8.200H8.600z" fill="#ff6f3c"/><path d="M10.500 .3 6.300 5.600 8.600 8.200z" fill="#ffb04a"/></svg>
<div class="a card" style="left:675px;top:346px;width:300px;height:361.5px;"><div class="a" style="left:0;top:0;width:298px;height:200px;overflow:hidden;"><svg width="298" height="200" viewBox="0 0 298 200" style="display:block;background:#d0cfde"><defs><filter id="b3" x="-5%" y="-5%" width="110%" height="110%"><feGaussianBlur stdDeviation="1.3"/></filter></defs><g filter="url(#b3)"><rect x="0" y="0" width="298" height="200" fill="#d2d1e0"/><rect x="0" y="0" width="298" height="60" fill="#d9d8e6" opacity=".6"/><circle cx="35.500" cy="46" r="34" fill="#dddce6"/><g transform="translate(35.5 46.5) rotate(8)"><path d="M-1.5 -3.6 C -18.6 -10.5 -16.5 -30.6 3 -30 C 18.6 -28.8 18 -9 -1.5 -3.6 Z" fill="#e8302a"/></g><g transform="translate(35.5 46.5) rotate(80)"><path d="M-1.5 -3.6 C -18.6 -10.5 -16.5 -30.6 3 -30 C 18.6 -28.8 18 -9 -1.5 -3.6 Z" fill="#f4a91c"/></g><g transform="translate(35.5 46.5) rotate(152)"><path d="M-1.5 -3.6 C -18.6 -10.5 -16.5 -30.6 3 -30 C 18.6 -28.8 18 -9 -1.5 -3.6 Z" fill="#22a84a"/></g><g transform="translate(35.5 46.5) rotate(224)"><path d="M-1.5 -3.6 C -18.6 -10.5 -16.5 -30.6 3 -30 C 18.6 -28.8 18 -9 -1.5 -3.6 Z" fill="#1f6fdc"/></g><g transform="translate(35.5 46.5) rotate(296)"><path d="M-1.5 -3.6 C -18.6 -10.5 -16.5 -30.6 3 -30 C 18.6 -28.8 18 -9 -1.5 -3.6 Z" fill="#e87fc0"/></g><text x="161" y="86" font-family="Liberation Sans, sans-serif" font-size="50" font-weight="700" fill="#4350ae" textLength="160" lengthAdjust="spacingAndGlyphs">immich</text><text x="146" y="123" font-family="Liberation Sans, sans-serif" font-size="13" fill="#6a72c2" textLength="172" lengthAdjust="spacingAndGlyphs">self-hosted photo and</text><text x="141" y="143" font-family="Liberation Sans, sans-serif" font-size="13" fill="#6a72c2" textLength="164" lengthAdjust="spacingAndGlyphs">video management sol</text><g transform="translate(-8 104) rotate(-5)"><rect x="0" y="0" width="88" height="56" rx="4" fill="#1b1b1e"/><rect x="4" y="4" width="13" height="10" fill="#56708c"/><rect x="18" y="4" width="13" height="10" fill="#7f90a4"/><rect x="32" y="4" width="13" height="10" fill="#2a2a2e"/><rect x="46" y="4" width="13" height="10" fill="#2e2e33"/><rect x="60" y="4" width="13" height="10" fill="#8f3a3a"/><rect x="74" y="4" width="13" height="10" fill="#7f90a4"/><rect x="4" y="16" width="13" height="10" fill="#8a8f98"/><rect x="18" y="16" width="13" height="10" fill="#9aa3ad"/><rect x="32" y="16" width="13" height="10" fill="#8f3a3a"/><rect x="46" y="16" width="13" height="10" fill="#4a6078"/><rect x="60" y="16" width="13" height="10" fill="#3a2426"/><rect x="74" y="16" width="13" height="10" fill="#9aa3ad"/><rect x="4" y="28" width="13" height="10" fill="#26262a"/><rect x="18" y="28" width="13" height="10" fill="#2a2a2e"/><rect x="32" y="28" width="13" height="10" fill="#3a2426"/><rect x="46" y="28" width="13" height="10" fill="#56708c"/><rect x="60" y="28" width="13" height="10" fill="#7f90a4"/><rect x="74" y="28" width="13" height="10" fill="#2a2a2e"/><rect x="4" y="40" width="13" height="10" fill="#2e2e33"/><rect x="18" y="40" width="13" height="10" fill="#8f3a3a"/><rect x="32" y="40" width="13" height="10" fill="#7f90a4"/><rect x="46" y="40" width="13" height="10" fill="#8a8f98"/><rect x="60" y="40" width="13" height="10" fill="#9aa3ad"/><rect x="74" y="40" width="13" height="10" fill="#8f3a3a"/></g><g transform="translate(-4 146) rotate(-6)"><rect x="0" y="0" width="70" height="40" rx="4" fill="#1b1b1e"/><rect x="4" y="4" width="13" height="10" fill="#2e2e33"/><rect x="18" y="4" width="13" height="10" fill="#8f3a3a"/><rect x="32" y="4" width="13" height="10" fill="#7f90a4"/><rect x="46" y="4" width="13" height="10" fill="#8a8f98"/><rect x="60" y="4" width="13" height="10" fill="#9aa3ad"/><rect x="4" y="16" width="13" height="10" fill="#8f3a3a"/><rect x="18" y="16" width="13" height="10" fill="#4a6078"/><rect x="32" y="16" width="13" height="10" fill="#3a2426"/><rect x="46" y="16" width="13" height="10" fill="#9aa3ad"/><rect x="60" y="16" width="13" height="10" fill="#26262a"/><rect x="4" y="28" width="13" height="10" fill="#2a2a2e"/><rect x="18" y="28" width="13" height="10" fill="#3a2426"/><rect x="32" y="28" width="13" height="10" fill="#56708c"/><rect x="46" y="28" width="13" height="10" fill="#7f90a4"/><rect x="60" y="28" width="13" height="10" fill="#2a2a2e"/></g><g transform="translate(68 96) rotate(9)"><rect x="0" y="0" width="44" height="84" rx="4" fill="#1b1b1e"/><rect x="4" y="4" width="13" height="10" fill="#7f90a4"/><rect x="18" y="4" width="13" height="10" fill="#2a2a2e"/><rect x="32" y="4" width="13" height="10" fill="#2e2e33"/><rect x="4" y="16" width="13" height="10" fill="#8f3a3a"/><rect x="18" y="16" width="13" height="10" fill="#7f90a4"/><rect x="32" y="16" width="13" height="10" fill="#8a8f98"/><rect x="4" y="28" width="13" height="10" fill="#9aa3ad"/><rect x="18" y="28" width="13" height="10" fill="#8f3a3a"/><rect x="32" y="28" width="13" height="10" fill="#4a6078"/><rect x="4" y="40" width="13" height="10" fill="#3a2426"/><rect x="18" y="40" width="13" height="10" fill="#9aa3ad"/><rect x="32" y="40" width="13" height="10" fill="#26262a"/><rect x="4" y="52" width="13" height="10" fill="#2a2a2e"/><rect x="18" y="52" width="13" height="10" fill="#3a2426"/><rect x="32" y="52" width="13" height="10" fill="#56708c"/><rect x="4" y="64" width="13" height="10" fill="#7f90a4"/><rect x="18" y="64" width="13" height="10" fill="#2a2a2e"/><rect x="32" y="64" width="13" height="10" fill="#2e2e33"/></g><g transform="translate(54 140) rotate(-10)"><rect x="0" y="0" width="40" height="44" rx="4" fill="#1b1b1e"/><rect x="4" y="4" width="13" height="10" fill="#7f90a4"/><rect x="18" y="4" width="13" height="10" fill="#8a8f98"/><rect x="4" y="16" width="13" height="10" fill="#9aa3ad"/><rect x="18" y="16" width="13" height="10" fill="#8f3a3a"/><rect x="4" y="28" width="13" height="10" fill="#4a6078"/><rect x="18" y="28" width="13" height="10" fill="#3a2426"/></g></g></svg></div></div>
<div class="a" style="left:795px;top:416.5px;width:60px;height:60px;border-radius:8px;background:#8b8a94;"><svg class="a" style="left:5px;top:5px" width="50" height="50" viewBox="0 0 50 50"><circle cx="25" cy="25" r="24.500" fill="#fff"/><g transform="translate(25 25.5) rotate(8)"><path d="M-1.025 -2.46 C -12.71 -7.175 -11.275 -20.91 2.05 -20.5 C 12.71 -19.68 12.3 -6.15 -1.025 -2.46 Z" fill="#e8302a"/></g><g transform="translate(25 25.5) rotate(80)"><path d="M-1.025 -2.46 C -12.71 -7.175 -11.275 -20.91 2.05 -20.5 C 12.71 -19.68 12.3 -6.15 -1.025 -2.46 Z" fill="#f4a91c"/></g><g transform="translate(25 25.5) rotate(152)"><path d="M-1.025 -2.46 C -12.71 -7.175 -11.275 -20.91 2.05 -20.5 C 12.71 -19.68 12.3 -6.15 -1.025 -2.46 Z" fill="#22a84a"/></g><g transform="translate(25 25.5) rotate(224)"><path d="M-1.025 -2.46 C -12.71 -7.175 -11.275 -20.91 2.05 -20.5 C 12.71 -19.68 12.3 -6.15 -1.025 -2.46 Z" fill="#1f6fdc"/></g><g transform="translate(25 25.5) rotate(296)"><path d="M-1.025 -2.46 C -12.71 -7.175 -11.275 -20.91 2.05 -20.5 C 12.71 -19.68 12.3 -6.15 -1.025 -2.46 Z" fill="#e87fc0"/></g></svg></div>
<div class="a" style="left:859.4px;top:506.9px;width:104.5px;height:29.8px;background:rgba(43,43,43,.59);border-radius:8px;"></div>
<svg class="a" style="left:864.8px;top:511.2px;" width="19.3" height="22" viewBox="0 0 17.500 20"><path d="M3.500 1.500h7.300l4.700 4.700V12M2 12V3a1.500 1.500 0 0 1 1.500-1.500" fill="none" stroke="rgba(215,222,240,.55)" stroke-width="1.300" stroke-linejoin="round"/><path d="M10.600 1.700v3.400a1.200 1.200 0 0 0 1.200 1.200h3.500" fill="none" stroke="rgba(215,222,240,.55)" stroke-width="1.300"/><text x="8.800" y="19.300" text-anchor="middle" font-family="Liberation Sans, sans-serif" font-size="5.600" font-weight="700" fill="rgba(215,222,240,.55)" textLength="15.500" lengthAdjust="spacingAndGlyphs">HTML</text></svg>
<svg class="a" style="left:889.8px;top:511.2px;" width="19.3" height="22" viewBox="0 0 17.500 20"><path d="M3.500 1.500h7.300l4.700 4.700V17a1.500 1.500 0 0 1-1.500 1.500h-10.500A1.500 1.500 0 0 1 2 17V3a1.500 1.500 0 0 1 1.500-1.500z" fill="none" stroke="rgba(215,222,240,.55)" stroke-width="1.300" stroke-linejoin="round"/><path d="M10.600 1.700v3.400a1.200 1.200 0 0 0 1.200 1.200h3.500" fill="none" stroke="rgba(215,222,240,.55)" stroke-width="1.300"/><circle cx="6.300" cy="7.800" r="1.700" fill="rgba(215,222,240,.55)"/><path d="M2.300 17.600v-3.300l3.200-2.700 2.800 2 3.600-3.400 3.400 2.600v4.800z" fill="rgba(215,222,240,.55)"/></svg>
<svg class="a" style="left:914.8px;top:511.2px;" width="19.3" height="22" viewBox="0 0 17.500 20"><path d="M3.500 1.500h7.300l4.700 4.700V17a1.500 1.500 0 0 1-1.500 1.500h-10.500A1.500 1.500 0 0 1 2 17V3a1.500 1.500 0 0 1 1.500-1.500z" fill="none" stroke="rgba(215,222,240,.55)" stroke-width="1.300" stroke-linejoin="round"/><path d="M10.600 1.700v3.400a1.200 1.200 0 0 0 1.200 1.200h3.500" fill="none" stroke="rgba(215,222,240,.55)" stroke-width="1.300"/><path d="M4.300 16.200c1.500-1 3.200-3.700 4-6 .5-1.500.4-2.900-.3-2.900s-.9 1.300-.3 2.900c.8 2.200 2.900 4.600 5.300 4.700 1 .05 1-.9 0-1.100-2-.4-6 .700-8.700 2.400z" fill="none" stroke="rgba(215,222,240,.55)" stroke-width="1.100" stroke-linejoin="round"/></svg>
<svg class="a" style="left:939.8px;top:511.2px;" width="19.3" height="22" viewBox="0 0 17.500 20"><path d="M3.500 1.500h7.300l4.700 4.700V17a1.500 1.500 0 0 1-1.500 1.500h-10.500A1.500 1.500 0 0 1 2 17V3a1.500 1.500 0 0 1 1.500-1.500z" fill="none" stroke="rgba(215,222,240,.55)" stroke-width="1.300" stroke-linejoin="round"/><path d="M10.600 1.700v3.400a1.200 1.200 0 0 0 1.200 1.200h3.500" fill="none" stroke="rgba(215,222,240,.55)" stroke-width="1.300"/><path d="M5 9.500h7.500M5 12.200h7.500M5 14.900h4.500" stroke="rgba(215,222,240,.55)" stroke-width="1.300" stroke-linecap="round"/></svg>
<span id="t26" class="t " style="top:568.26px;font-size:18px;color:#7dd3fc;left:691.00px;letter-spacing:-0.240px;">Welcome to Immich | Immich</span>
<svg class="a" style="left:690.7px;top:632.1px;" width="23.6" height="23.6" viewBox="0 0 16 16"><g fill="#b4b8bf" stroke="#b4b8bf" stroke-width="0.35" stroke-linejoin="round"><path d="M4.715 6.542 3.343 7.914a3 3 0 1 0 4.243 4.243l1.828-1.829A3 3 0 0 0 8.586 5.5L8 6.086a1 1 0 0 0-.154.199 2 2 0 0 1 .861 3.337L6.880 11.450a2 2 0 1 1-2.830-2.830l.793-.792a4 4 0 0 1-.128-1.287z"/><path d="M6.586 4.672A3 3 0 0 0 7.414 9.500l.775-.776a2 2 0 0 1-.896-3.346L9.120 3.550a2 2 0 1 1 2.830 2.830l-.793.792c.112.420.155.855.128 1.287l1.372-1.372a3 3 0 1 0-4.243-4.243z"/></g></svg>
<span id="t27" class="t " style="top:635.96px;font-size:16px;color:#b9bdc4;left:718.50px;letter-spacing:-0.444px;">immich.app</span>
<div class="a" style="left:676px;top:671px;width:298px;height:1px;background:#3a3a3a;"></div>
<svg class="a" style="left:692.25px;top:680.2px;" width="22.75" height="16.6833" viewBox="0 0 24 17.600"><g fill="none" stroke="#7dd3fc" stroke-width="1.700" stroke-linecap="round" stroke-linejoin="round"><path d="M1.200 16.600V13.400C1.200 6.600 6 2.700 12 2.700s10.800 3.900 10.800 10.700v3.200z"/><path d="M1.700 .900l3.500 3.900M22.300 .900l-3.500 3.900"/></g><circle cx="8.400" cy="11.100" r="1.250" fill="#7dd3fc"/><circle cx="15.600" cy="11.100" r="1.250" fill="#7dd3fc"/></svg>
<span id="t28" class="t " style="top:682.96px;font-size:16px;color:#c2c6cc;left:721.00px;letter-spacing:-0.600px;">Self-Hosted Apps</span>
<svg class="a" style="left:856.5px;top:682.5px;" width="15.5" height="15.5" viewBox="0 0 16 16"><g fill="#c2c6cc"><path d="M14 0H2a2 2 0 0 0-2 2v12a2 2 0 0 0 2 2h12a2 2 0 0 0 2-2V2a2 2 0 0 0-2-2M1 3.857C1 3.384 1.448 3 2 3h12c.552 0 1 .384 1 .857v10.286c0 .473-.448.857-1 .857H2c-.552 0-1-.384-1-.857z"/><path d="M6.500 7a1 1 0 1 0 0-2 1 1 0 0 0 0 2m3 0a1 1 0 1 0 0-2 1 1 0 0 0 0 2m3 0a1 1 0 1 0 0-2 1 1 0 0 0 0 2m-9 3a1 1 0 1 0 0-2 1 1 0 0 0 0 2m3 0a1 1 0 1 0 0-2 1 1 0 0 0 0 2m3 0a1 1 0 1 0 0-2 1 1 0 0 0 0 2m3 0a1 1 0 1 0 0-2 1 1 0 0 0 0 2m-9 3a1 1 0 1 0 0-2 1 1 0 0 0 0 2m3 0a1 1 0 1 0 0-2 1 1 0 0 0 0 2m3 0a1 1 0 1 0 0-2 1 1 0 0 0 0 2"/></g></svg>
<span id="t29" class="t " style="top:682.96px;font-size:16px;color:#c2c6cc;left:877.00px;letter-spacing:-1.000px;">Jun 27, 2025</span>
<div class="a card" style="left:1000px;top:346px;width:300px;height:361.5px;"><div class="a" style="left:0;top:0;width:298px;height:200px;overflow:hidden;"><svg width="298" height="200" viewBox="0 0 298 200" style="display:block;background:#d4d4d4"><defs><filter id="b4" x="-5%" y="-5%" width="110%" height="110%"><feGaussianBlur stdDeviation="1.3"/></filter></defs><g filter="url(#b4)"><defs><linearGradient id="wg" x1="0" y1="0" x2="0" y2="1"><stop offset="0" stop-color="#d0d0d0"/><stop offset=".45" stop-color="#dcdcdc"/><stop offset="1" stop-color="#c9c9c9"/></linearGradient></defs><rect width="298" height="200" fill="url(#wg)"/><path d="M2 62c10 4 14 14 16 26M16 60c2 10 2 18 0 28" stroke="#7fb8e0" stroke-width="3" fill="none"/><path d="M40 58c14-4 24 2 20 14-4 12-22 24-44 34 6-14 12-34 24-48z" fill="#dfe6ee"/><path d="M30 100c14-12 30-18 42-16-8 12-28 22-48 26z" fill="#9aa8c8"/><path d="M44 96c10-8 20-10 28-10-4 8-14 14-28 18z" fill="#1c78c8"/><path d="M14 108c14-2 34 4 42 16 4 8 2 20-6 24-14-4-30-22-36-40z" fill="#1a7fd0"/><path d="M30 116c10 4 18 12 22 26-10-4-18-14-22-26z" fill="#0f5aa8"/><path d="M0 96c6 2 12 8 14 16-6 0-12-4-14-8z" fill="#8ecbf0"/><text x="85" y="124.500" font-family="Liberation Sans, sans-serif" font-size="80" font-weight="700" fill="#3b40a0" textLength="148" lengthAdjust="spacingAndGlyphs" stroke="#3b40a0" stroke-width="3" stroke-linejoin="round">Wiki</text><text x="240" y="124.500" font-family="Liberation Sans, sans-serif" font-size="80" font-weight="700" fill="#18a2dc" textLength="84" lengthAdjust="spacingAndGlyphs" stroke="#18a2dc" stroke-width="3" stroke-linejoin="round">.js</text></g></svg></div></div>
<div class="a" style="left:1120px;top:416.5px;width:60px;height:60px;border-radius:8px;background:#56577c;"><svg class="a" style="left:5px;top:5px" width="50" height="50" viewBox="0 0 50 50"><rect width="50" height="50" rx="2.500" fill="#fff"/><g transform="translate(.8 1.200) scale(3.025)"><path d="M8 0C3.580 0 0 3.580 0 8c0 3.540 2.290 6.530 5.470 7.590.4.070.550-.170.550-.380 0-.190-.010-.820-.010-1.490-2.010.370-2.530-.490-2.690-.940-.090-.230-.480-.940-.820-1.130-.280-.150-.680-.520-.010-.530.630-.010 1.080.580 1.230.820.720 1.210 1.870.870 2.330.660.070-.520.280-.870.510-1.070-1.780-.2-3.640-.890-3.640-3.950 0-.870.310-1.590.820-2.150-.080-.2-.360-1.020.080-2.120 0 0 .670-.210 2.200.820.640-.180 1.320-.270 2-.270s1.360.090 2 .270c1.530-1.040 2.200-.820 2.200-.820.440 1.100.160 1.920.080 2.120.510.560.820 1.270.820 2.150 0 3.070-1.870 3.750-3.650 3.950.290.250.540.730.540 1.480 0 1.070-.010 1.930-.010 2.200 0 .210.150.460.550.380A8.010 8.010 0 0 0 16 8c0-4.420-3.580-8-8-8" fill="#1f2328"/></g></svg></div>
<div class="a" style="left:1208.9px;top:506.9px;width:80px;height:29.8px;background:rgba(43,43,43,.59);border-radius:8px;"></div>
<svg class="a" style="left:1214.3px;top:511.2px;" width="19.3" height="22" viewBox="0 0 17.500 20"><path d="M3.500 1.500h7.300l4.700 4.700V17a1.500 1.500 0 0 1-1.500 1.500h-10.500A1.500 1.500 0 0 1 2 17V3a1.500 1.500 0 0 1 1.500-1.500z" fill="none" stroke="rgba(215,222,240,.55)" stroke-width="1.300" stroke-linejoin="round"/><path d="M10.600 1.700v3.400a1.200 1.200 0 0 0 1.200 1.200h3.500" fill="none" stroke="rgba(215,222,240,.55)" stroke-width="1.300"/><circle cx="6.300" cy="7.800" r="1.700" fill="rgba(215,222,240,.55)"/><path d="M2.300 17.600v-3.300l3.200-2.700 2.800 2 3.600-3.400 3.400 2.600v4.800z" fill="rgba(215,222,240,.55)"/></svg>
<svg class="a" style="left:1239.3px;top:511.2px;" width="19.3" height="22" viewBox="0 0 17.500 20"><path d="M3.500 1.500h7.300l4.700 4.700V17a1.500 1.500 0 0 1-1.500 1.500h-10.500A1.500 1.500 0 0 1 2 17V3a1.500 1.500 0 0 1 1.500-1.500z" fill="none" stroke="rgba(215,222,240,.55)" stroke-width="1.300" stroke-linejoin="round"/><path d="M10.600 1.700v3.400a1.200 1.200 0 0 0 1.200 1.200h3.500" fill="none" stroke="rgba(215,222,240,.55)" stroke-width="1.300"/><path d="M4.300 16.200c1.500-1 3.200-3.700 4-6 .5-1.500.4-2.900-.3-2.900s-.9 1.300-.3 2.900c.8 2.200 2.900 4.600 5.300 4.700 1 .05 1-.9 0-1.100-2-.4-6 .700-8.700 2.400z" fill="none" stroke="rgba(215,222,240,.55)" stroke-width="1.100" stroke-linejoin="round"/></svg>
<svg class="a" style="left:1264.3px;top:511.2px;" width="19.3" height="22" viewBox="0 0 17.500 20"><path d="M3.500 1.500h7.300l4.700 4.700V17a1.500 1.500 0 0 1-1.500 1.500h-10.500A1.500 1.500 0 0 1 2 17V3a1.500 1.500 0 0 1 1.500-1.500z" fill="none" stroke="rgba(215,222,240,.55)" stroke-width="1.300" stroke-linejoin="round"/><path d="M10.600 1.700v3.400a1.200 1.200 0 0 0 1.200 1.200h3.500" fill="none" stroke="rgba(215,222,240,.55)" stroke-width="1.300"/><path d="M5 9.500h7.500M5 12.200h7.500M5 14.900h4.500" stroke="rgba(215,222,240,.55)" stroke-width="1.300" stroke-linecap="round"/></svg>
<span id="t30" class="t " style="top:568.26px;font-size:18px;color:#7dd3fc;left:1016.00px;letter-spacing:-0.235px;">GitHub - requarks/wiki: Wiki.js | A</span>
<span id="t31" class="t " style="top:593.26px;font-size:18px;color:#7dd3fc;left:1016.00px;letter-spacing:-0.067px;">modern and powerful wiki app...</span>
<svg class="a" style="left:1015.7px;top:632.1px;" width="23.6" height="23.6" viewBox="0 0 16 16"><g fill="#b4b8bf" stroke="#b4b8bf" stroke-width="0.35" stroke-linejoin="round"><path d="M4.715 6.542 3.343 7.914a3 3 0 1 0 4.243 4.243l1.828-1.829A3 3 0 0 0 8.586 5.5L8 6.086a1 1 0 0 0-.154.199 2 2 0 0 1 .861 3.337L6.880 11.450a2 2 0 1 1-2.830-2.830l.793-.792a4 4 0 0 1-.128-1.287z"/><path d="M6.586 4.672A3 3 0 0 0 7.414 9.500l.775-.776a2 2 0 0 1-.896-3.346L9.120 3.550a2 2 0 1 1 2.830 2.830l-.793.792c.112.420.155.855.128 1.287l1.372-1.372a3 3 0 1 0-4.243-4.243z"/></g></svg>
<span id="t32" class="t " style="top:635.96px;font-size:16px;color:#b9bdc4;left:1043.50px;letter-spacing:-0.334px;">github.com</span>
<div class="a" style="left:1001px;top:671px;width:298px;height:1px;background:#3a3a3a;"></div>
<svg class="a" style="left:1017.25px;top:680.2px;" width="22.75" height="16.6833" viewBox="0 0 24 17.600"><g fill="none" stroke="#7dd3fc" stroke-width="1.700" stroke-linecap="round" stroke-linejoin="round"><path d="M1.200 16.600V13.400C1.200 6.600 6 2.700 12 2.700s10.800 3.900 10.800 10.700v3.200z"/><path d="M1.700 .900l3.500 3.900M22.300 .900l-3.500 3.900"/></g><circle cx="8.400" cy="11.100" r="1.250" fill="#7dd3fc"/><circle cx="15.600" cy="11.100" r="1.250" fill="#7dd3fc"/></svg>
<span id="t33" class="t " style="top:682.96px;font-size:16px;color:#c2c6cc;left:1046.00px;letter-spacing:-0.600px;">Self-Hosted Apps</span>
<svg class="a" style="left:1181.5px;top:682.5px;" width="15.5" height="15.5" viewBox="0 0 16 16"><g fill="#c2c6cc"><path d="M14 0H2a2 2 0 0 0-2 2v12a2 2 0 0 0 2 2h12a2 2 0 0 0 2-2V2a2 2 0 0 0-2-2M1 3.857C1 3.384 1.448 3 2 3h12c.552 0 1 .384 1 .857v10.286c0 .473-.448.857-1 .857H2c-.552 0-1-.384-1-.857z"/><path d="M6.500 7a1 1 0 1 0 0-2 1 1 0 0 0 0 2m3 0a1 1 0 1 0 0-2 1 1 0 0 0 0 2m3 0a1 1 0 1 0 0-2 1 1 0 0 0 0 2m-9 3a1 1 0 1 0 0-2 1 1 0 0 0 0 2m3 0a1 1 0 1 0 0-2 1 1 0 0 0 0 2m3 0a1 1 0 1 0 0-2 1 1 0 0 0 0 2m3 0a1 1 0 1 0 0-2 1 1 0 0 0 0 2m-9 3a1 1 0 1 0 0-2 1 1 0 0 0 0 2m3 0a1 1 0 1 0 0-2 1 1 0 0 0 0 2m3 0a1 1 0 1 0 0-2 1 1 0 0 0 0 2"/></g></svg>
<span id="t34" class="t " style="top:682.96px;font-size:16px;color:#c2c6cc;left:1202.00px;letter-spacing:-1.000px;">Jun 27, 2025</span>
<div class="a card" style="left:1325px;top:346px;width:300px;height:361.5px;"><div class="a" style="left:0;top:0;width:298px;height:200px;overflow:hidden;"><svg width="298" height="200" viewBox="0 0 298 200" style="display:block;background:#d6d6d6"><defs><filter id="b5" x="-5%" y="-5%" width="110%" height="110%"><feGaussianBlur stdDeviation="0.9"/></filter></defs><g filter="url(#b5)"><rect x="0" y="196.500" width="298" height="4" fill="#3c7db6"/><text x="-1" y="52" font-family="Liberation Sans, sans-serif" font-size="28" fill="#5c5c5c" textLength="141" lengthAdjust="spacingAndGlyphs">omarr-labs/</text><text x="-2" y="85" font-family="Liberation Sans, sans-serif" font-size="28" font-weight="700" fill="#3b3b3b" textLength="70" lengthAdjust="spacingAndGlyphs">omarr</text><text x="0" y="114" font-family="Liberation Sans, sans-serif" font-size="9.500" fill="#8d8d8d" textLength="182" lengthAdjust="spacingAndGlyphs">dern and easy to use dashboard. 30+</text><text x="0" y="130" font-family="Liberation Sans, sans-serif" font-size="9.500" fill="#8d8d8d" textLength="234" lengthAdjust="spacingAndGlyphs">rations. 10K+ icons built in. Authentication out</text><text x="0" y="147" font-family="Liberation Sans, sans-serif" font-size="9.500" fill="#8d8d8d" textLength="76" lengthAdjust="spacingAndGlyphs">box. No YAML...</text><text x="66" y="165" font-family="Liberation Sans, sans-serif" font-size="10" font-weight="700" fill="#7d7d7d" textLength="18" lengthAdjust="spacingAndGlyphs">162</text><text x="124" y="165" font-family="Liberation Sans, sans-serif" font-size="10" font-weight="700" fill="#7d7d7d" textLength="13" lengthAdjust="spacingAndGlyphs">27</text><text x="205" y="165" font-family="Liberation Sans, sans-serif" font-size="10" font-weight="700" fill="#7d7d7d" textLength="17" lengthAdjust="spacingAndGlyphs">991</text><text x="262" y="165" font-family="Liberation Sans, sans-serif" font-size="10" font-weight="700" fill="#7d7d7d" textLength="13" lengthAdjust="spacingAndGlyphs">60</text><text x="0" y="179" font-family="Liberation Sans, sans-serif" font-size="7.5"  fill="#a3a3a3" textLength="33" lengthAdjust="spacingAndGlyphs">ntributors</text><text x="66" y="179" font-family="Liberation Sans, sans-serif" font-size="7.5"  fill="#a3a3a3" textLength="26" lengthAdjust="spacingAndGlyphs">Issues</text><text x="124" y="179" font-family="Liberation Sans, sans-serif" font-size="7.5"  fill="#a3a3a3" textLength="48" lengthAdjust="spacingAndGlyphs">Discussions</text><text x="205" y="179" font-family="Liberation Sans, sans-serif" font-size="7.5"  fill="#a3a3a3" textLength="20" lengthAdjust="spacingAndGlyphs">Stars</text><path d="M262 56c2-10 8-16 12-18 0 6 2 10 6 12 4-8 12-12 20-12v40c-6 2-12 2-16 0-10-2-18-10-22-22z" fill="#e0413f"/><circle cx="291" cy="62" r="2.200" fill="#f4d6d6"/><path d="M281 70c6-4 14-5 19-3v14h-18z" fill="#e0413f"/><path d="M284 52c4-6 10-8 14-6" stroke="#f0dada" stroke-width="2" fill="none"/><circle cx="54.500" cy="161" r="4.500" fill="none" stroke="#9a9a9a" stroke-width="1.200"/><path d="M107 158h9v6h-5l-2 2v-2h-2z" fill="none" stroke="#9a9a9a" stroke-width="1.200"/><path d="M194 156l1.500 3.500 3.500.3-2.700 2.400.8 3.600-3.100-2-3.100 2 .8-3.600-2.700-2.400 3.500-.3z" fill="none" stroke="#9a9a9a" stroke-width="1.100"/></g></svg></div></div>
<div class="a" style="left:1445px;top:416.5px;width:60px;height:60px;border-radius:8px;background:#8b8b8b;"><svg class="a" style="left:5px;top:5px" width="50" height="50" viewBox="0 0 50 50"><rect width="50" height="50" rx="2.500" fill="#fff"/><g transform="translate(.8 1.200) scale(3.025)"><path d="M8 0C3.580 0 0 3.580 0 8c0 3.540 2.290 6.530 5.470 7.590.4.070.550-.170.550-.380 0-.190-.010-.820-.010-1.490-2.010.370-2.530-.490-2.690-.940-.090-.230-.480-.940-.820-1.130-.280-.150-.680-.520-.010-.530.630-.010 1.080.580 1.230.820.720 1.210 1.870.870 2.330.660.070-.520.280-.870.510-1.070-1.780-.2-3.640-.890-3.640-3.950 0-.870.310-1.590.820-2.150-.080-.2-.360-1.020.080-2.120 0 0 .670-.210 2.200.820.640-.180 1.320-.270 2-.270s1.360.090 2 .270c1.530-1.040 2.200-.820 2.200-.820.440 1.100.160 1.920.080 2.120.510.560.820 1.270.820 2.150 0 3.070-1.870 3.750-3.650 3.950.290.250.540.730.540 1.480 0 1.070-.010 1.930-.010 2.200 0 .210.150.460.550.380A8.010 8.010 0 0 0 16 8c0-4.420-3.580-8-8-8" fill="#1f2328"/></g></svg></div>
<div class="a" style="left:1533.9px;top:506.9px;width:80px;height:29.8px;background:rgba(43,43,43,.59);border-radius:8px;"></div>
<svg class="a" style="left:1539.3px;top:511.2px;" width="19.3" height="22" viewBox="0 0 17.500 20"><path d="M3.500 1.500h7.300l4.700 4.700V17a1.500 1.500 0 0 1-1.500 1.500h-10.500A1.500 1.500 0 0 1 2 17V3a1.500 1.500 0 0 1 1.500-1.500z" fill="none" stroke="rgba(215,222,240,.55)" stroke-width="1.300" stroke-linejoin="round"/><path d="M10.600 1.700v3.400a1.200 1.200 0 0 0 1.200 1.200h3.500" fill="none" stroke="rgba(215,222,240,.55)" stroke-width="1.300"/><circle cx="6.300" cy="7.800" r="1.700" fill="rgba(215,222,240,.55)"/><path d="M2.300 17.600v-3.300l3.200-2.700 2.800 2 3.600-3.400 3.400 2.600v4.800z" fill="rgba(215,222,240,.55)"/></svg>
<svg class="a" style="left:1564.3px;top:511.2px;" width="19.3" height="22" viewBox="0 0 17.500 20"><path d="M3.500 1.500h7.300l4.700 4.700V17a1.500 1.500 0 0 1-1.500 1.500h-10.500A1.500 1.500 0 0 1 2 17V3a1.500 1.500 0 0 1 1.500-1.500z" fill="none" stroke="rgba(215,222,240,.55)" stroke-width="1.300" stroke-linejoin="round"/><path d="M10.600 1.700v3.400a1.200 1.200 0 0 0 1.200 1.200h3.500" fill="none" stroke="rgba(215,222,240,.55)" stroke-width="1.300"/><path d="M4.300 16.200c1.500-1 3.200-3.700 4-6 .5-1.500.4-2.900-.3-2.900s-.9 1.300-.3 2.900c.8 2.200 2.900 4.600 5.300 4.700 1 .05 1-.9 0-1.100-2-.4-6 .700-8.700 2.400z" fill="none" stroke="rgba(215,222,240,.55)" stroke-width="1.100" stroke-linejoin="round"/></svg>
<svg class="a" style="left:1589.3px;top:511.2px;" width="19.3" height="22" viewBox="0 0 17.500 20"><path d="M3.500 1.500h7.300l4.700 4.700V17a1.500 1.500 0 0 1-1.500 1.500h-10.500A1.500 1.500 0 0 1 2 17V3a1.500 1.500 0 0 1 1.500-1.500z" fill="none" stroke="rgba(215,222,240,.55)" stroke-width="1.300" stroke-linejoin="round"/><path d="M10.600 1.700v3.400a1.200 1.200 0 0 0 1.200 1.200h3.500" fill="none" stroke="rgba(215,222,240,.55)" stroke-width="1.300"/><path d="M5 9.500h7.500M5 12.200h7.500M5 14.900h4.500" stroke="rgba(215,222,240,.55)" stroke-width="1.300" stroke-linecap="round"/></svg>
<span id="t35" class="t " style="top:568.26px;font-size:18px;color:#7dd3fc;left:1341.00px;letter-spacing:-0.069px;">GitHub - homarr-labs/homarr: A</span>
<span id="t36" class="t " style="top:593.26px;font-size:18px;color:#7dd3fc;left:1341.00px;letter-spacing:-0.292px;">modern and easy to use...</span>
<svg class="a" style="left:1340.7px;top:632.1px;" width="23.6" height="23.6" viewBox="0 0 16 16"><g fill="#b4b8bf" stroke="#b4b8bf" stroke-width="0.35" stroke-linejoin="round"><path d="M4.715 6.542 3.343 7.914a3 3 0 1 0 4.243 4.243l1.828-1.829A3 3 0 0 0 8.586 5.5L8 6.086a1 1 0 0 0-.154.199 2 2 0 0 1 .861 3.337L6.880 11.450a2 2 0 1 1-2.830-2.830l.793-.792a4 4 0 0 1-.128-1.287z"/><path d="M6.586 4.672A3 3 0 0 0 7.414 9.500l.775-.776a2 2 0 0 1-.896-3.346L9.120 3.550a2 2 0 1 1 2.830 2.830l-.793.792c.112.420.155.855.128 1.287l1.372-1.372a3 3 0 1 0-4.243-4.243z"/></g></svg>
<span id="t37" class="t " style="top:635.96px;font-size:16px;color:#b9bdc4;left:1368.50px;letter-spacing:-0.334px;">github.com</span>
<div class="a" style="left:1326px;top:671px;width:298px;height:1px;background:#3a3a3a;"></div>
<svg class="a" style="left:1342.25px;top:680.2px;" width="22.75" height="16.6833" viewBox="0 0 24 17.600"><g fill="none" stroke="#7dd3fc" stroke-width="1.700" stroke-linecap="round" stroke-linejoin="round"><path d="M1.200 16.600V13.400C1.200 6.600 6 2.700 12 2.700s10.800 3.900 10.800 10.700v3.200z"/><path d="M1.700 .900l3.500 3.900M22.300 .900l-3.500 3.900"/></g><circle cx="8.400" cy="11.100" r="1.250" fill="#7dd3fc"/><circle cx="15.600" cy="11.100" r="1.250" fill="#7dd3fc"/></svg>
<span id="t38" class="t " style="top:682.96px;font-size:16px;color:#c2c6cc;left:1371.00px;letter-spacing:-0.600px;">Self-Hosted Apps</span>
<svg class="a" style="left:1506.5px;top:682.5px;" width="15.5" height="15.5" viewBox="0 0 16 16"><g fill="#c2c6cc"><path d="M14 0H2a2 2 0 0 0-2 2v12a2 2 0 0 0 2 2h12a2 2 0 0 0 2-2V2a2 2 0 0 0-2-2M1 3.857C1 3.384 1.448 3 2 3h12c.552 0 1 .384 1 .857v10.286c0 .473-.448.857-1 .857H2c-.552 0-1-.384-1-.857z"/><path d="M6.500 7a1 1 0 1 0 0-2 1 1 0 0 0 0 2m3 0a1 1 0 1 0 0-2 1 1 0 0 0 0 2m3 0a1 1 0 1 0 0-2 1 1 0 0 0 0 2m-9 3a1 1 0 1 0 0-2 1 1 0 0 0 0 2m3 0a1 1 0 1 0 0-2 1 1 0 0 0 0 2m3 0a1 1 0 1 0 0-2 1 1 0 0 0 0 2m3 0a1 1 0 1 0 0-2 1 1 0 0 0 0 2m-9 3a1 1 0 1 0 0-2 1 1 0 0 0 0 2m3 0a1 1 0 1 0 0-2 1 1 0 0 0 0 2m3 0a1 1 0 1 0 0-2 1 1 0 0 0 0 2"/></g></svg>
<span id="t39" class="t " style="top:682.96px;font-size:16px;color:#c2c6cc;left:1527.00px;letter-spacing:-1.000px;">Jun 27, 2025</span>
<div class="a card" style="left:1650px;top:346px;width:300px;height:361.5px;"><div class="a" style="left:0;top:0;width:298px;height:200px;overflow:hidden;"><svg width="298" height="200" viewBox="0 0 298 200" style="display:block;background:#060606"><defs><filter id="b7" x="-5%" y="-5%" width="110%" height="110%"><feGaussianBlur stdDeviation="1.2"/></filter></defs><g filter="url(#b7)"><text x="148" y="158" font-family="Liberation Sans, sans-serif" font-size="222" font-weight="700" fill="#0f2e6c" text-anchor="middle" textLength="104" lengthAdjust="spacingAndGlyphs">a</text></g></svg></div></div>
<div class="a" style="left:1770px;top:416.5px;width:60px;height:60px;border-radius:8px;background:#0a1730;"><svg class="a" style="left:5px;top:5px" width="50" height="50" viewBox="0 0 50 50"><rect width="50" height="50" rx="2.500" fill="#fff"/><g transform="translate(.8 1.200) scale(3.025)"><path d="M8 0C3.580 0 0 3.580 0 8c0 3.540 2.290 6.530 5.470 7.590.4.070.550-.170.550-.380 0-.190-.010-.820-.010-1.490-2.010.370-2.530-.490-2.690-.940-.090-.230-.480-.940-.820-1.130-.280-.150-.680-.520-.010-.530.630-.010 1.080.580 1.230.820.720 1.210 1.870.870 2.330.660.070-.520.280-.870.510-1.070-1.780-.2-3.640-.890-3.640-3.950 0-.870.310-1.590.820-2.150-.080-.2-.360-1.020.080-2.120 0 0 .670-.210 2.200.820.640-.180 1.320-.270 2-.270s1.360.090 2 .270c1.530-1.040 2.200-.820 2.200-.820.440 1.100.160 1.920.080 2.120.510.560.820 1.270.820 2.150 0 3.070-1.870 3.750-3.650 3.950.290.250.540.730.540 1.480 0 1.070-.010 1.930-.010 2.200 0 .210.150.460.550.380A8.010 8.010 0 0 0 16 8c0-4.420-3.580-8-8-8" fill="#1f2328"/></g></svg></div>
<div class="a" style="left:1858.9px;top:506.9px;width:80px;height:29.8px;background:rgba(28,28,28,.9);border-radius:8px;"></div>
<svg class="a" style="left:1864.3px;top:511.2px;" width="19.3" height="22" viewBox="0 0 17.500 20"><path d="M3.500 1.500h7.300l4.700 4.700V17a1.500 1.500 0 0 1-1.500 1.500h-10.500A1.500 1.500 0 0 1 2 17V3a1.500 1.500 0 0 1 1.500-1.500z" fill="none" stroke="rgba(255,255,255,.92)" stroke-width="1.300" stroke-linejoin="round"/><path d="M10.600 1.700v3.400a1.200 1.200 0 0 0 1.200 1.200h3.500" fill="none" stroke="rgba(255,255,255,.92)" stroke-width="1.300"/><circle cx="6.300" cy="7.800" r="1.700" fill="rgba(255,255,255,.92)"/><path d="M2.300 17.600v-3.300l3.200-2.700 2.800 2 3.600-3.400 3.400 2.600v4.800z" fill="rgba(255,255,255,.92)"/></svg>
<svg class="a" style="left:1889.3px;top:511.2px;" width="19.3" height="22" viewBox="0 0 17.500 20"><path d="M3.500 1.500h7.300l4.700 4.700V17a1.500 1.500 0 0 1-1.500 1.500h-10.500A1.500 1.500 0 0 1 2 17V3a1.500 1.500 0 0 1 1.500-1.500z" fill="none" stroke="rgba(255,255,255,.92)" stroke-width="1.300" stroke-linejoin="round"/><path d="M10.600 1.700v3.400a1.200 1.200 0 0 0 1.200 1.200h3.500" fill="none" stroke="rgba(255,255,255,.92)" stroke-width="1.300"/><path d="M4.300 16.200c1.500-1 3.200-3.700 4-6 .5-1.500.4-2.900-.3-2.900s-.9 1.300-.3 2.900c.8 2.200 2.900 4.600 5.300 4.700 1 .05 1-.9 0-1.100-2-.4-6 .700-8.700 2.400z" fill="none" stroke="rgba(255,255,255,.92)" stroke-width="1.100" stroke-linejoin="round"/></svg>
<svg class="a" style="left:1914.3px;top:511.2px;" width="19.3" height="22" viewBox="0 0 17.500 20"><path d="M3.500 1.500h7.300l4.700 4.700V17a1.500 1.500 0 0 1-1.500 1.500h-10.500A1.500 1.500 0 0 1 2 17V3a1.500 1.500 0 0 1 1.500-1.500z" fill="none" stroke="rgba(255,255,255,.92)" stroke-width="1.300" stroke-linejoin="round"/><path d="M10.600 1.700v3.400a1.200 1.200 0 0 0 1.200 1.200h3.500" fill="none" stroke="rgba(255,255,255,.92)" stroke-width="1.300"/><path d="M5 9.500h7.500M5 12.200h7.500M5 14.900h4.500" stroke="rgba(255,255,255,.92)" stroke-width="1.300" stroke-linecap="round"/></svg>
<span id="t40" class="t " style="top:568.26px;font-size:18px;color:#7dd3fc;left:1666.00px;letter-spacing:-0.143px;">GitHub -</span>
<span id="t41" class="t " style="top:593.26px;font-size:18px;color:#7dd3fc;left:1666.00px;letter-spacing:-0.266px;">automatisch/automatisch: The...</span>
<svg class="a" style="left:1665.7px;top:632.1px;" width="23.6" height="23.6" viewBox="0 0 16 16"><g fill="#b4b8bf" stroke="#b4b8bf" stroke-width="0.35" stroke-linejoin="round"><path d="M4.715 6.542 3.343 7.914a3 3 0 1 0 4.243 4.243l1.828-1.829A3 3 0 0 0 8.586 5.5L8 6.086a1 1 0 0 0-.154.199 2 2 0 0 1 .861 3.337L6.880 11.450a2 2 0 1 1-2.830-2.830l.793-.792a4 4 0 0 1-.128-1.287z"/><path d="M6.586 4.672A3 3 0 0 0 7.414 9.500l.775-.776a2 2 0 0 1-.896-3.346L9.120 3.550a2 2 0 1 1 2.830 2.830l-.793.792c.112.420.155.855.128 1.287l1.372-1.372a3 3 0 1 0-4.243-4.243z"/></g></svg>
<span id="t42" class="t " style="top:635.96px;font-size:16px;color:#b9bdc4;left:1693.50px;letter-spacing:-0.334px;">github.com</span>
<div class="a" style="left:1651px;top:671px;width:298px;height:1px;background:#3a3a3a;"></div>
<svg class="a" style="left:1667.25px;top:680.2px;" width="22.75" height="16.6833" viewBox="0 0 24 17.600"><g fill="none" stroke="#7dd3fc" stroke-width="1.700" stroke-linecap="round" stroke-linejoin="round"><path d="M1.200 16.600V13.400C1.200 6.600 6 2.700 12 2.700s10.800 3.900 10.800 10.700v3.200z"/><path d="M1.700 .900l3.500 3.900M22.300 .900l-3.500 3.900"/></g><circle cx="8.400" cy="11.100" r="1.250" fill="#7dd3fc"/><circle cx="15.600" cy="11.100" r="1.250" fill="#7dd3fc"/></svg>
<span id="t43" class="t " style="top:682.96px;font-size:16px;color:#c2c6cc;left:1696.00px;letter-spacing:-0.600px;">Self-Hosted Apps</span>
<svg class="a" style="left:1831.5px;top:682.5px;" width="15.5" height="15.5" viewBox="0 0 16 16"><g fill="#c2c6cc"><path d="M14 0H2a2 2 0 0 0-2 2v12a2 2 0 0 0 2 2h12a2 2 0 0 0 2-2V2a2 2 0 0 0-2-2M1 3.857C1 3.384 1.448 3 2 3h12c.552 0 1 .384 1 .857v10.286c0 .473-.448.857-1 .857H2c-.552 0-1-.384-1-.857z"/><path d="M6.500 7a1 1 0 1 0 0-2 1 1 0 0 0 0 2m3 0a1 1 0 1 0 0-2 1 1 0 0 0 0 2m3 0a1 1 0 1 0 0-2 1 1 0 0 0 0 2m-9 3a1 1 0 1 0 0-2 1 1 0 0 0 0 2m3 0a1 1 0 1 0 0-2 1 1 0 0 0 0 2m3 0a1 1 0 1 0 0-2 1 1 0 0 0 0 2m3 0a1 1 0 1 0 0-2 1 1 0 0 0 0 2m-9 3a1 1 0 1 0 0-2 1 1 0 0 0 0 2m3 0a1 1 0 1 0 0-2 1 1 0 0 0 0 2m3 0a1 1 0 1 0 0-2 1 1 0 0 0 0 2"/></g></svg>
<span id="t44" class="t " style="top:682.96px;font-size:16px;color:#c2c6cc;left:1852.00px;letter-spacing:-1.000px;">Jun 27, 2025</span>
<div class="a card" style="left:1975px;top:346px;width:300px;height:361.5px;"><div class="a" style="left:0;top:0;width:298px;height:200px;overflow:hidden;"><svg width="298" height="200" viewBox="0 0 298 200" style="display:block;background:#d6d6d6"><defs><filter id="b6" x="-5%" y="-5%" width="110%" height="110%"><feGaussianBlur stdDeviation="0.9"/></filter></defs><g filter="url(#b6)"><rect x="0" y="196.500" width="298" height="4" fill="#3c7db6"/><text x="-1" y="52" font-family="Liberation Sans, sans-serif" font-size="28" fill="#5c5c5c" textLength="69" lengthAdjust="spacingAndGlyphs">0011/</text><text x="71.5" y="52" font-family="Liberation Sans, sans-serif" font-size="28" font-weight="700" fill="#3b3b3b" textLength="162" lengthAdjust="spacingAndGlyphs">omni-tools</text><text x="0" y="80" font-family="Liberation Sans, sans-serif" font-size="9.500" fill="#8d8d8d" textLength="150" lengthAdjust="spacingAndGlyphs">osted collection of powerful web-based tools for</text><text x="0" y="96" font-family="Liberation Sans, sans-serif" font-size="9.500" fill="#8d8d8d" textLength="150" lengthAdjust="spacingAndGlyphs">eryday tasks. No ads, no tracking, just fast, acces</text><text x="0" y="112" font-family="Liberation Sans, sans-serif" font-size="9.500" fill="#8d8d8d" textLength="150" lengthAdjust="spacingAndGlyphs">sible utilities right from your browser.</text><text x="66" y="165" font-family="Liberation Sans, sans-serif" font-size="10" font-weight="700" fill="#7d7d7d" textLength="11" lengthAdjust="spacingAndGlyphs">29</text><text x="124" y="165" font-family="Liberation Sans, sans-serif" font-size="10" font-weight="700" fill="#7d7d7d" textLength="13" lengthAdjust="spacingAndGlyphs">4k</text><text x="0" y="179" font-family="Liberation Sans, sans-serif" font-size="7.5"  fill="#a3a3a3" textLength="30" lengthAdjust="spacingAndGlyphs">ntributors</text><text x="62" y="179" font-family="Liberation Sans, sans-serif" font-size="7.5"  fill="#a3a3a3" textLength="26" lengthAdjust="spacingAndGlyphs">Issues</text><text x="118" y="179" font-family="Liberation Sans, sans-serif" font-size="7.5"  fill="#a3a3a3" textLength="20" lengthAdjust="spacingAndGlyphs">Stars</text><circle cx="54.500" cy="161" r="4.500" fill="none" stroke="#9a9a9a" stroke-width="1.200"/><path d="M112 156l1.500 3.500 3.500.3-2.700 2.400.8 3.600-3.100-2-3.100 2 .8-3.600-2.700-2.400 3.500-.3z" fill="none" stroke="#9a9a9a" stroke-width="1.100"/></g></svg></div></div>
<div class="a" style="left:2095px;top:416.5px;width:60px;height:60px;border-radius:8px;background:#8b8b8b;"><svg class="a" style="left:5px;top:5px" width="50" height="50" viewBox="0 0 50 50"><rect width="50" height="50" rx="2.500" fill="#fff"/><g transform="translate(.8 1.200) scale(3.025)"><path d="M8 0C3.580 0 0 3.580 0 8c0 3.540 2.290 6.530 5.470 7.590.4.070.550-.170.550-.380 0-.190-.010-.820-.010-1.490-2.010.370-2.530-.490-2.690-.940-.090-.230-.480-.940-.820-1.130-.280-.150-.680-.520-.010-.530.630-.010 1.080.580 1.230.820.720 1.210 1.870.870 2.330.660.070-.520.280-.870.510-1.070-1.780-.2-3.640-.890-3.640-3.950 0-.870.310-1.590.820-2.150-.080-.2-.360-1.020.080-2.120 0 0 .670-.210 2.200.820.640-.180 1.320-.270 2-.270s1.360.090 2 .270c1.530-1.040 2.200-.820 2.200-.820.440 1.100.160 1.920.080 2.120.510.560.820 1.270.820 2.150 0 3.070-1.870 3.750-3.650 3.950.290.250.540.730.540 1.480 0 1.070-.010 1.930-.010 2.200 0 .210.150.460.550.380A8.010 8.010 0 0 0 16 8c0-4.420-3.580-8-8-8" fill="#1f2328"/></g></svg></div>
<div class="a" style="left:2183.9px;top:506.9px;width:80px;height:29.8px;background:rgba(43,43,43,.59);border-radius:8px;"></div>
<svg class="a" style="left:2189.3px;top:511.2px;" width="19.3" height="22" viewBox="0 0 17.500 20"><path d="M3.500 1.500h7.300l4.700 4.700V17a1.500 1.500 0 0 1-1.500 1.500h-10.500A1.500 1.500 0 0 1 2 17V3a1.500 1.500 0 0 1 1.500-1.500z" fill="none" stroke="rgba(215,222,240,.55)" stroke-width="1.300" stroke-linejoin="round"/><path d="M10.600 1.700v3.400a1.200 1.200 0 0 0 1.200 1.200h3.500" fill="none" stroke="rgba(215,222,240,.55)" stroke-width="1.300"/><circle cx="6.300" cy="7.800" r="1.700" fill="rgba(215,222,240,.55)"/><path d="M2.300 17.600v-3.300l3.200-2.700 2.800 2 3.600-3.400 3.400 2.600v4.800z" fill="rgba(215,222,240,.55)"/></svg>
<svg class="a" style="left:2214.3px;top:511.2px;" width="19.3" height="22" viewBox="0 0 17.500 20"><path d="M3.500 1.500h7.300l4.700 4.700V17a1.500 1.500 0 0 1-1.500 1.500h-10.500A1.500 1.500 0 0 1 2 17V3a1.500 1.500 0 0 1 1.500-1.500z" fill="none" stroke="rgba(215,222,240,.55)" stroke-width="1.300" stroke-linejoin="round"/><path d="M10.600 1.700v3.400a1.200 1.200 0 0 0 1.200 1.200h3.500" fill="none" stroke="rgba(215,222,240,.55)" stroke-width="1.300"/><path d="M4.300 16.200c1.500-1 3.200-3.700 4-6 .5-1.500.4-2.900-.3-2.900s-.9 1.300-.3 2.900c.8 2.200 2.900 4.600 5.300 4.700 1 .05 1-.9 0-1.100-2-.4-6 .700-8.700 2.400z" fill="none" stroke="rgba(215,222,240,.55)" stroke-width="1.100" stroke-linejoin="round"/></svg>
<svg class="a" style="left:2239.3px;top:511.2px;" width="19.3" height="22" viewBox="0 0 17.500 20"><path d="M3.500 1.500h7.300l4.700 4.700V17a1.500 1.500 0 0 1-1.500 1.500h-10.500A1.500 1.500 0 0 1 2 17V3a1.500 1.500 0 0 1 1.500-1.500z" fill="none" stroke="rgba(215,222,240,.55)" stroke-width="1.300" stroke-linejoin="round"/><path d="M10.600 1.700v3.400a1.200 1.200 0 0 0 1.200 1.200h3.500" fill="none" stroke="rgba(215,222,240,.55)" stroke-width="1.300"/><path d="M5 9.500h7.500M5 12.200h7.500M5 14.900h4.500" stroke="rgba(215,222,240,.55)" stroke-width="1.300" stroke-linecap="round"/></svg>
<span id="t45" class="t " style="top:568.26px;font-size:18px;color:#7dd3fc;left:1991.00px;letter-spacing:-0.200px;">GitHub - iib0011/omni-tools: Self-</span>
<span id="t46" class="t " style="top:593.26px;font-size:18px;color:#7dd3fc;left:1991.00px;letter-spacing:-0.200px;">hosted collection of powerful...</span>
<svg class="a" style="left:1990.7px;top:632.1px;" width="23.6" height="23.6" viewBox="0 0 16 16"><g fill="#b4b8bf" stroke="#b4b8bf" stroke-width="0.35" stroke-linejoin="round"><path d="M4.715 6.542 3.343 7.914a3 3 0 1 0 4.243 4.243l1.828-1.829A3 3 0 0 0 8.586 5.5L8 6.086a1 1 0 0 0-.154.199 2 2 0 0 1 .861 3.337L6.880 11.450a2 2 0 1 1-2.830-2.830l.793-.792a4 4 0 0 1-.128-1.287z"/><path d="M6.586 4.672A3 3 0 0 0 7.414 9.500l.775-.776a2 2 0 0 1-.896-3.346L9.120 3.550a2 2 0 1 1 2.830 2.830l-.793.792c.112.420.155.855.128 1.287l1.372-1.372a3 3 0 1 0-4.243-4.243z"/></g></svg>
<span id="t47" class="t " style="top:635.96px;font-size:16px;color:#b9bdc4;left:2018.50px;letter-spacing:-0.334px;">github.com</span>
<div class="a" style="left:1976px;top:671px;width:298px;height:1px;background:#3a3a3a;"></div>
<svg class="a" style="left:1992.25px;top:680.2px;" width="22.75" height="16.6833" viewBox="0 0 24 17.600"><g fill="none" stroke="#7dd3fc" stroke-width="1.700" stroke-linecap="round" stroke-linejoin="round"><path d="M1.200 16.600V13.400C1.200 6.600 6 2.700 12 2.700s10.800 3.900 10.800 10.700v3.200z"/><path d="M1.700 .900l3.500 3.900M22.300 .900l-3.500 3.900"/></g><circle cx="8.400" cy="11.100" r="1.250" fill="#7dd3fc"/><circle cx="15.600" cy="11.100" r="1.250" fill="#7dd3fc"/></svg>
<span id="t48" class="t " style="top:682.96px;font-size:16px;color:#c2c6cc;left:2021.00px;letter-spacing:-0.600px;">Self-Hosted Apps</span>
<svg class="a" style="left:2156.5px;top:682.5px;" width="15.5" height="15.5" viewBox="0 0 16 16"><g fill="#c2c6cc"><path d="M14 0H2a2 2 0 0 0-2 2v12a2 2 0 0 0 2 2h12a2 2 0 0 0 2-2V2a2 2 0 0 0-2-2M1 3.857C1 3.384 1.448 3 2 3h12c.552 0 1 .384 1 .857v10.286c0 .473-.448.857-1 .857H2c-.552 0-1-.384-1-.857z"/><path d="M6.500 7a1 1 0 1 0 0-2 1 1 0 0 0 0 2m3 0a1 1 0 1 0 0-2 1 1 0 0 0 0 2m3 0a1 1 0 1 0 0-2 1 1 0 0 0 0 2m-9 3a1 1 0 1 0 0-2 1 1 0 0 0 0 2m3 0a1 1 0 1 0 0-2 1 1 0 0 0 0 2m3 0a1 1 0 1 0 0-2 1 1 0 0 0 0 2m3 0a1 1 0 1 0 0-2 1 1 0 0 0 0 2m-9 3a1 1 0 1 0 0-2 1 1 0 0 0 0 2m3 0a1 1 0 1 0 0-2 1 1 0 0 0 0 2m3 0a1 1 0 1 0 0-2 1 1 0 0 0 0 2"/></g></svg>
<span id="t49" class="t " style="top:682.96px;font-size:16px;color:#c2c6cc;left:2177.00px;letter-spacing:-1.000px;">Jun 27, 2025</span>
<div class="a card" style="left:25px;top:788.25px;width:300px;height:362.25px;"><div class="a" style="left:0;top:0;width:298px;height:200px;overflow:hidden;"><div style="width:298px;height:200px;background:#cfd0d1"></div></div></div>
<div class="a" style="left:145px;top:858.75px;width:60px;height:60px;border-radius:8px;background:#8f9091;box-shadow:0 1px 3px rgba(0,0,0,.18);"><svg class="a" style="left:0;top:0" width="60" height="60" viewBox="0 0 60 60"><path d="M11 6.700h16v6.300h-9.500v21.300h9.500v18.200l-9-11.500h-7z" fill="#ee2f5c"/><path d="M33.300 6.700h15.700v34.300h-15.700v-6.700h9.200v-21.300h-9.200z" fill="#22a7ea"/></svg></div>
<div class="a" style="left:233.9px;top:949.15px;width:80px;height:29.8px;background:rgba(43,43,43,.59);border-radius:8px;"></div>
<svg class="a" style="left:239.3px;top:953.45px;" width="19.3" height="22" viewBox="0 0 17.500 20"><path d="M3.500 1.500h7.300l4.700 4.700V17a1.500 1.500 0 0 1-1.500 1.500h-10.500A1.500 1.500 0 0 1 2 17V3a1.500 1.500 0 0 1 1.500-1.500z" fill="none" stroke="rgba(215,222,240,.55)" stroke-width="1.300" stroke-linejoin="round"/><path d="M10.600 1.700v3.400a1.200 1.200 0 0 0 1.200 1.200h3.500" fill="none" stroke="rgba(215,222,240,.55)" stroke-width="1.300"/><circle cx="6.300" cy="7.800" r="1.700" fill="rgba(215,222,240,.55)"/><path d="M2.300 17.600v-3.300l3.200-2.700 2.800 2 3.600-3.400 3.400 2.600v4.800z" fill="rgba(215,222,240,.55)"/></svg>
<svg class="a" style="left:264.3px;top:953.45px;" width="19.3" height="22" viewBox="0 0 17.500 20"><path d="M3.500 1.500h7.300l4.700 4.700V17a1.500 1.500 0 0 1-1.500 1.500h-10.500A1.500 1.500 0 0 1 2 17V3a1.500 1.500 0 0 1 1.500-1.500z" fill="none" stroke="rgba(215,222,240,.55)" stroke-width="1.300" stroke-linejoin="round"/><path d="M10.600 1.700v3.400a1.200 1.200 0 0 0 1.200 1.200h3.500" fill="none" stroke="rgba(215,222,240,.55)" stroke-width="1.300"/><path d="M4.300 16.200c1.500-1 3.200-3.700 4-6 .5-1.500.4-2.900-.3-2.900s-.9 1.300-.3 2.900c.8 2.200 2.900 4.600 5.300 4.700 1 .05 1-.9 0-1.100-2-.4-6 .700-8.700 2.400z" fill="none" stroke="rgba(215,222,240,.55)" stroke-width="1.100" stroke-linejoin="round"/></svg>
<svg class="a" style="left:289.3px;top:953.45px;" width="19.3" height="22" viewBox="0 0 17.500 20"><path d="M3.500 1.500h7.300l4.700 4.700V17a1.500 1.500 0 0 1-1.500 1.500h-10.500A1.500 1.500 0 0 1 2 17V3a1.500 1.500 0 0 1 1.500-1.500z" fill="none" stroke="rgba(215,222,240,.55)" stroke-width="1.300" stroke-linejoin="round"/><path d="M10.600 1.700v3.400a1.200 1.200 0 0 0 1.200 1.200h3.500" fill="none" stroke="rgba(215,222,240,.55)" stroke-width="1.300"/><path d="M5 9.500h7.500M5 12.200h7.500M5 14.900h4.500" stroke="rgba(215,222,240,.55)" stroke-width="1.300" stroke-linecap="round"/></svg>
<span id="t50" class="t " style="top:1011.26px;font-size:18px;color:#7dd3fc;left:41.00px;letter-spacing:-0.259px;">I use Docker Desktop with no</span>
<span id="t51" class="t " style="top:1036.26px;font-size:18px;color:#7dd3fc;left:41.00px;letter-spacing:-0.333px;">coding experience and here's wh...</span>
<svg class="a" style="left:40.7px;top:1065.6px;" width="23.6" height="23.6" viewBox="0 0 16 16"><g fill="#b4b8bf" stroke="#b4b8bf" stroke-width="0.35" stroke-linejoin="round"><path d="M4.715 6.542 3.343 7.914a3 3 0 1 0 4.243 4.243l1.828-1.829A3 3 0 0 0 8.586 5.5L8 6.086a1 1 0 0 0-.154.199 2 2 0 0 1 .861 3.337L6.880 11.450a2 2 0 1 1-2.830-2.830l.793-.792a4 4 0 0 1-.128-1.287z"/><path d="M6.586 4.672A3 3 0 0 0 7.414 9.500l.775-.776a2 2 0 0 1-.896-3.346L9.120 3.550a2 2 0 1 1 2.830 2.830l-.793.792c.112.420.155.855.128 1.287l1.372-1.372a3 3 0 1 0-4.243-4.243z"/></g></svg>
<span id="t52" class="t " style="top:1069.46px;font-size:16px;color:#b9bdc4;left:68.50px;letter-spacing:-0.647px;">www.xda-developers.com</span>
<div class="a" style="left:26px;top:1104.25px;width:298px;height:1px;background:#3a3a3a;"></div>
<svg class="a" style="left:40.7px;top:1115.5px;" width="23.6" height="23.6" viewBox="0 0 16 16"><g fill="#7dd3fc"><path d="M9.828 3h3.982a2 2 0 0 1 1.992 2.181l-.637 7A2 2 0 0 1 13.174 14H2.825a2 2 0 0 1-1.991-1.819l-.637-7a2 2 0 0 1 .342-1.310L.5 3a2 2 0 0 1 2-2h3.672a2 2 0 0 1 1.414.586l.828.828A2 2 0 0 0 9.828 3m-8.322.120q.322-.119.684-.120h5.396l-.707-.707A1 1 0 0 0 6.172 2H2.500a1 1 0 0 0-1 .981z"/></g></svg>
<span id="t53" class="t " style="top:1121.46px;font-size:16px;color:#c2c6cc;left:68.50px;letter-spacing:-0.313px;">Portfolio of Work</span>
<svg class="a" style="left:206.5px;top:1121px;" width="15.5" height="15.5" viewBox="0 0 16 16"><g fill="#c2c6cc"><path d="M14 0H2a2 2 0 0 0-2 2v12a2 2 0 0 0 2 2h12a2 2 0 0 0 2-2V2a2 2 0 0 0-2-2M1 3.857C1 3.384 1.448 3 2 3h12c.552 0 1 .384 1 .857v10.286c0 .473-.448.857-1 .857H2c-.552 0-1-.384-1-.857z"/><path d="M6.500 7a1 1 0 1 0 0-2 1 1 0 0 0 0 2m3 0a1 1 0 1 0 0-2 1 1 0 0 0 0 2m3 0a1 1 0 1 0 0-2 1 1 0 0 0 0 2m-9 3a1 1 0 1 0 0-2 1 1 0 0 0 0 2m3 0a1 1 0 1 0 0-2 1 1 0 0 0 0 2m3 0a1 1 0 1 0 0-2 1 1 0 0 0 0 2m3 0a1 1 0 1 0 0-2 1 1 0 0 0 0 2m-9 3a1 1 0 1 0 0-2 1 1 0 0 0 0 2m3 0a1 1 0 1 0 0-2 1 1 0 0 0 0 2m3 0a1 1 0 1 0 0-2 1 1 0 0 0 0 2"/></g></svg>
<span id="t54" class="t " style="top:1121.46px;font-size:16px;color:#c2c6cc;left:227.00px;letter-spacing:-1.000px;">Jun 27, 2025</span>
<div class="a card" style="left:350px;top:788.25px;width:300px;height:362.25px;"><div class="a" style="left:0;top:0;width:298px;height:200px;overflow:hidden;"><div style="width:298px;height:200px;background:#cfd0d1"></div></div></div>
<div class="a" style="left:470px;top:858.75px;width:60px;height:60px;border-radius:8px;background:#8f9091;box-shadow:0 1px 3px rgba(0,0,0,.18);"><svg class="a" style="left:0;top:0" width="60" height="60" viewBox="0 0 60 60"><path d="M11 6.700h16v6.300h-9.500v21.300h9.500v18.200l-9-11.500h-7z" fill="#ee2f5c"/><path d="M33.300 6.700h15.700v34.300h-15.700v-6.700h9.200v-21.300h-9.200z" fill="#22a7ea"/></svg></div>
<div class="a" style="left:558.9px;top:949.15px;width:80px;height:29.8px;background:rgba(43,43,43,.59);border-radius:8px;"></div>
<svg class="a" style="left:564.3px;top:953.45px;" width="19.3" height="22" viewBox="0 0 17.500 20"><path d="M3.500 1.500h7.300l4.700 4.700V17a1.500 1.500 0 0 1-1.500 1.500h-10.500A1.500 1.500 0 0 1 2 17V3a1.500 1.500 0 0 1 1.500-1.500z" fill="none" stroke="rgba(215,222,240,.55)" stroke-width="1.300" stroke-linejoin="round"/><path d="M10.600 1.700v3.400a1.200 1.200 0 0 0 1.200 1.200h3.500" fill="none" stroke="rgba(215,222,240,.55)" stroke-width="1.300"/><circle cx="6.300" cy="7.800" r="1.700" fill="rgba(215,222,240,.55)"/><path d="M2.300 17.600v-3.300l3.200-2.700 2.800 2 3.600-3.400 3.400 2.600v4.800z" fill="rgba(215,222,240,.55)"/></svg>
<svg class="a" style="left:589.3px;top:953.45px;" width="19.3" height="22" viewBox="0 0 17.500 20"><path d="M3.500 1.500h7.300l4.700 4.700V17a1.500 1.500 0 0 1-1.500 1.500h-10.500A1.500 1.500 0 0 1 2 17V3a1.500 1.500 0 0 1 1.500-1.500z" fill="none" stroke="rgba(215,222,240,.55)" stroke-width="1.300" stroke-linejoin="round"/><path d="M10.600 1.700v3.400a1.200 1.200 0 0 0 1.200 1.200h3.500" fill="none" stroke="rgba(215,222,240,.55)" stroke-width="1.300"/><path d="M4.300 16.200c1.500-1 3.200-3.700 4-6 .5-1.500.4-2.900-.3-2.900s-.9 1.300-.3 2.900c.8 2.200 2.900 4.600 5.300 4.700 1 .05 1-.9 0-1.100-2-.4-6 .700-8.700 2.400z" fill="none" stroke="rgba(215,222,240,.55)" stroke-width="1.100" stroke-linejoin="round"/></svg>
<svg class="a" style="left:614.3px;top:953.45px;" width="19.3" height="22" viewBox="0 0 17.500 20"><path d="M3.500 1.500h7.300l4.700 4.700V17a1.500 1.500 0 0 1-1.500 1.500h-10.500A1.500 1.500 0 0 1 2 17V3a1.500 1.500 0 0 1 1.500-1.500z" fill="none" stroke="rgba(215,222,240,.55)" stroke-width="1.300" stroke-linejoin="round"/><path d="M10.600 1.700v3.400a1.200 1.200 0 0 0 1.200 1.200h3.500" fill="none" stroke="rgba(215,222,240,.55)" stroke-width="1.300"/><path d="M5 9.500h7.500M5 12.200h7.500M5 14.900h4.500" stroke="rgba(215,222,240,.55)" stroke-width="1.300" stroke-linecap="round"/></svg>
<span id="t55" class="t " style="top:1011.26px;font-size:18px;color:#7dd3fc;left:366.00px;letter-spacing:-0.400px;">6 under-the-radar FOSS projects</span>
<span id="t56" class="t " style="top:1036.26px;font-size:18px;color:#7dd3fc;left:366.00px;letter-spacing:-0.206px;">that could save you hundreds thi...</span>
<svg class="a" style="left:365.7px;top:1065.6px;" width="23.6" height="23.6" viewBox="0 0 16 16"><g fill="#b4b8bf" stroke="#b4b8bf" stroke-width="0.35" stroke-linejoin="round"><path d="M4.715 6.542 3.343 7.914a3 3 0 1 0 4.243 4.243l1.828-1.829A3 3 0 0 0 8.586 5.5L8 6.086a1 1 0 0 0-.154.199 2 2 0 0 1 .861 3.337L6.880 11.450a2 2 0 1 1-2.830-2.830l.793-.792a4 4 0 0 1-.128-1.287z"/><path d="M6.586 4.672A3 3 0 0 0 7.414 9.500l.775-.776a2 2 0 0 1-.896-3.346L9.120 3.550a2 2 0 1 1 2.830 2.830l-.793.792c.112.420.155.855.128 1.287l1.372-1.372a3 3 0 1 0-4.243-4.243z"/></g></svg>
<span id="t57" class="t " style="top:1069.46px;font-size:16px;color:#b9bdc4;left:393.50px;letter-spacing:-0.647px;">www.xda-developers.com</span>
<div class="a" style="left:351px;top:1104.25px;width:298px;height:1px;background:#3a3a3a;"></div>
<svg class="a" style="left:365.7px;top:1115.5px;" width="23.6" height="23.6" viewBox="0 0 16 16"><g fill="#7dd3fc"><path d="M9.828 3h3.982a2 2 0 0 1 1.992 2.181l-.637 7A2 2 0 0 1 13.174 14H2.825a2 2 0 0 1-1.991-1.819l-.637-7a2 2 0 0 1 .342-1.310L.5 3a2 2 0 0 1 2-2h3.672a2 2 0 0 1 1.414.586l.828.828A2 2 0 0 0 9.828 3m-8.322.120q.322-.119.684-.120h5.396l-.707-.707A1 1 0 0 0 6.172 2H2.500a1 1 0 0 0-1 .981z"/></g></svg>
<span id="t58" class="t " style="top:1121.46px;font-size:16px;color:#c2c6cc;left:393.50px;letter-spacing:-0.313px;">Portfolio of Work</span>
<svg class="a" style="left:531.5px;top:1121px;" width="15.5" height="15.5" viewBox="0 0 16 16"><g fill="#c2c6cc"><path d="M14 0H2a2 2 0 0 0-2 2v12a2 2 0 0 0 2 2h12a2 2 0 0 0 2-2V2a2 2 0 0 0-2-2M1 3.857C1 3.384 1.448 3 2 3h12c.552 0 1 .384 1 .857v10.286c0 .473-.448.857-1 .857H2c-.552 0-1-.384-1-.857z"/><path d="M6.500 7a1 1 0 1 0 0-2 1 1 0 0 0 0 2m3 0a1 1 0 1 0 0-2 1 1 0 0 0 0 2m3 0a1 1 0 1 0 0-2 1 1 0 0 0 0 2m-9 3a1 1 0 1 0 0-2 1 1 0 0 0 0 2m3 0a1 1 0 1 0 0-2 1 1 0 0 0 0 2m3 0a1 1 0 1 0 0-2 1 1 0 0 0 0 2m3 0a1 1 0 1 0 0-2 1 1 0 0 0 0 2m-9 3a1 1 0 1 0 0-2 1 1 0 0 0 0 2m3 0a1 1 0 1 0 0-2 1 1 0 0 0 0 2m3 0a1 1 0 1 0 0-2 1 1 0 0 0 0 2"/></g></svg>
<span id="t59" class="t " style="top:1121.46px;font-size:16px;color:#c2c6cc;left:552.00px;letter-spacing:-1.000px;">Jun 27, 2025</span>
<div class="a card" style="left:675px;top:788.25px;width:300px;height:362.25px;"><div class="a" style="left:0;top:0;width:298px;height:200px;overflow:hidden;"><div style="width:298px;height:200px;background:#cfd0d1"></div></div></div>
<div class="a" style="left:795px;top:858.75px;width:60px;height:60px;border-radius:8px;background:#8f9091;box-shadow:0 1px 3px rgba(0,0,0,.18);"><svg class="a" style="left:0;top:0" width="60" height="60" viewBox="0 0 60 60"><path d="M11 6.700h16v6.300h-9.500v21.300h9.500v18.200l-9-11.500h-7z" fill="#ee2f5c"/><path d="M33.300 6.700h15.700v34.300h-15.700v-6.700h9.200v-21.300h-9.200z" fill="#22a7ea"/></svg></div>
<div class="a" style="left:883.9px;top:949.15px;width:80px;height:29.8px;background:rgba(43,43,43,.59);border-radius:8px;"></div>
<svg class="a" style="left:889.3px;top:953.45px;" width="19.3" height="22" viewBox="0 0 17.500 20"><path d="M3.500 1.500h7.300l4.700 4.700V17a1.500 1.500 0 0 1-1.500 1.500h-10.500A1.500 1.500 0 0 1 2 17V3a1.500 1.500 0 0 1 1.500-1.500z" fill="none" stroke="rgba(215,222,240,.55)" stroke-width="1.300" stroke-linejoin="round"/><path d="M10.600 1.700v3.400a1.200 1.200 0 0 0 1.200 1.200h3.500" fill="none" stroke="rgba(215,222,240,.55)" stroke-width="1.300"/><circle cx="6.300" cy="7.800" r="1.700" fill="rgba(215,222,240,.55)"/><path d="M2.300 17.600v-3.300l3.200-2.700 2.800 2 3.600-3.400 3.400 2.600v4.800z" fill="rgba(215,222,240,.55)"/></svg>
<svg class="a" style="left:914.3px;top:953.45px;" width="19.3" height="22" viewBox="0 0 17.500 20"><path d="M3.500 1.500h7.300l4.700 4.700V17a1.500 1.500 0 0 1-1.500 1.500h-10.500A1.500 1.500 0 0 1 2 17V3a1.500 1.500 0 0 1 1.500-1.500z" fill="none" stroke="rgba(215,222,240,.55)" stroke-width="1.300" stroke-linejoin="round"/><path d="M10.600 1.700v3.400a1.200 1.200 0 0 0 1.200 1.200h3.500" fill="none" stroke="rgba(215,222,240,.55)" stroke-width="1.300"/><path d="M4.300 16.200c1.500-1 3.200-3.700 4-6 .5-1.500.4-2.900-.3-2.900s-.9 1.300-.3 2.900c.8 2.200 2.900 4.600 5.300 4.700 1 .05 1-.9 0-1.100-2-.4-6 .700-8.700 2.400z" fill="none" stroke="rgba(215,222,240,.55)" stroke-width="1.100" stroke-linejoin="round"/></svg>
<svg class="a" style="left:939.3px;top:953.45px;" width="19.3" height="22" viewBox="0 0 17.500 20"><path d="M3.500 1.500h7.300l4.700 4.700V17a1.500 1.500 0 0 1-1.500 1.500h-10.500A1.500 1.500 0 0 1 2 17V3a1.500 1.500 0 0 1 1.500-1.500z" fill="none" stroke="rgba(215,222,240,.55)" stroke-width="1.300" stroke-linejoin="round"/><path d="M10.600 1.700v3.400a1.200 1.200 0 0 0 1.200 1.200h3.500" fill="none" stroke="rgba(215,222,240,.55)" stroke-width="1.300"/><path d="M5 9.500h7.500M5 12.200h7.500M5 14.900h4.500" stroke="rgba(215,222,240,.55)" stroke-width="1.300" stroke-linecap="round"/></svg>
<span id="t60" class="t " style="top:1011.26px;font-size:18px;color:#7dd3fc;left:691.00px;letter-spacing:-0.069px;">I tried to see if Immich could</span>
<span id="t61" class="t " style="top:1036.26px;font-size:18px;color:#7dd3fc;left:691.00px;letter-spacing:-0.242px;">replace my favorite Google Phot...</span>
<svg class="a" style="left:690.7px;top:1065.6px;" width="23.6" height="23.6" viewBox="0 0 16 16"><g fill="#b4b8bf" stroke="#b4b8bf" stroke-width="0.35" stroke-linejoin="round"><path d="M4.715 6.542 3.343 7.914a3 3 0 1 0 4.243 4.243l1.828-1.829A3 3 0 0 0 8.586 5.5L8 6.086a1 1 0 0 0-.154.199 2 2 0 0 1 .861 3.337L6.880 11.450a2 2 0 1 1-2.830-2.830l.793-.792a4 4 0 0 1-.128-1.287z"/><path d="M6.586 4.672A3 3 0 0 0 7.414 9.500l.775-.776a2 2 0 0 1-.896-3.346L9.120 3.550a2 2 0 1 1 2.830 2.830l-.793.792c.112.420.155.855.128 1.287l1.372-1.372a3 3 0 1 0-4.243-4.243z"/></g></svg>
<span id="t62" class="t " style="top:1069.46px;font-size:16px;color:#b9bdc4;left:718.50px;letter-spacing:-0.647px;">www.xda-developers.com</span>
<div class="a" style="left:676px;top:1104.25px;width:298px;height:1px;background:#3a3a3a;"></div>
<svg class="a" style="left:690.7px;top:1115.5px;" width="23.6" height="23.6" viewBox="0 0 16 16"><g fill="#7dd3fc"><path d="M9.828 3h3.982a2 2 0 0 1 1.992 2.181l-.637 7A2 2 0 0 1 13.174 14H2.825a2 2 0 0 1-1.991-1.819l-.637-7a2 2 0 0 1 .342-1.310L.5 3a2 2 0 0 1 2-2h3.672a2 2 0 0 1 1.414.586l.828.828A2 2 0 0 0 9.828 3m-8.322.120q.322-.119.684-.120h5.396l-.707-.707A1 1 0 0 0 6.172 2H2.500a1 1 0 0 0-1 .981z"/></g></svg>
<span id="t63" class="t " style="top:1121.46px;font-size:16px;color:#c2c6cc;left:718.50px;letter-spacing:-0.313px;">Portfolio of Work</span>
<svg class="a" style="left:856.5px;top:1121px;" width="15.5" height="15.5" viewBox="0 0 16 16"><g fill="#c2c6cc"><path d="M14 0H2a2 2 0 0 0-2 2v12a2 2 0 0 0 2 2h12a2 2 0 0 0 2-2V2a2 2 0 0 0-2-2M1 3.857C1 3.384 1.448 3 2 3h12c.552 0 1 .384 1 .857v10.286c0 .473-.448.857-1 .857H2c-.552 0-1-.384-1-.857z"/><path d="M6.500 7a1 1 0 1 0 0-2 1 1 0 0 0 0 2m3 0a1 1 0 1 0 0-2 1 1 0 0 0 0 2m3 0a1 1 0 1 0 0-2 1 1 0 0 0 0 2m-9 3a1 1 0 1 0 0-2 1 1 0 0 0 0 2m3 0a1 1 0 1 0 0-2 1 1 0 0 0 0 2m3 0a1 1 0 1 0 0-2 1 1 0 0 0 0 2m3 0a1 1 0 1 0 0-2 1 1 0 0 0 0 2m-9 3a1 1 0 1 0 0-2 1 1 0 0 0 0 2m3 0a1 1 0 1 0 0-2 1 1 0 0 0 0 2m3 0a1 1 0 1 0 0-2 1 1 0 0 0 0 2"/></g></svg>
<span id="t64" class="t " style="top:1121.46px;font-size:16px;color:#c2c6cc;left:877.00px;letter-spacing:-1.000px;">Jun 27, 2025</span>
<div class="a card" style="left:1000px;top:788.25px;width:300px;height:362.25px;"><div class="a" style="left:0;top:0;width:298px;height:200px;overflow:hidden;"><div style="width:298px;height:200px;background:#cfd0d1"></div></div></div>
<div class="a" style="left:1120px;top:858.75px;width:60px;height:60px;border-radius:8px;background:#8f9091;box-shadow:0 1px 3px rgba(0,0,0,.18);"><svg class="a" style="left:0;top:0" width="60" height="60" viewBox="0 0 60 60"><path d="M11 6.700h16v6.300h-9.500v21.300h9.500v18.200l-9-11.500h-7z" fill="#ee2f5c"/><path d="M33.300 6.700h15.700v34.300h-15.700v-6.700h9.200v-21.300h-9.200z" fill="#22a7ea"/></svg></div>
<div class="a" style="left:1208.9px;top:949.15px;width:80px;height:29.8px;background:rgba(43,43,43,.59);border-radius:8px;"></div>
<svg class="a" style="left:1214.3px;top:953.45px;" width="19.3" height="22" viewBox="0 0 17.500 20"><path d="M3.500 1.500h7.300l4.700 4.700V17a1.500 1.500 0 0 1-1.500 1.500h-10.500A1.500 1.500 0 0 1 2 17V3a1.500 1.500 0 0 1 1.500-1.500z" fill="none" stroke="rgba(215,222,240,.55)" stroke-width="1.300" stroke-linejoin="round"/><path d="M10.600 1.700v3.400a1.200 1.200 0 0 0 1.200 1.200h3.500" fill="none" stroke="rgba(215,222,240,.55)" stroke-width="1.300"/><circle cx="6.300" cy="7.800" r="1.700" fill="rgba(215,222,240,.55)"/><path d="M2.300 17.600v-3.300l3.200-2.700 2.800 2 3.600-3.400 3.400 2.600v4.800z" fill="rgba(215,222,240,.55)"/></svg>
<svg class="a" style="left:1239.3px;top:953.45px;" width="19.3" height="22" viewBox="0 0 17.500 20"><path d="M3.500 1.500h7.300l4.700 4.700V17a1.500 1.500 0 0 1-1.500 1.500h-10.500A1.500 1.500 0 0 1 2 17V3a1.500 1.500 0 0 1 1.500-1.500z" fill="none" stroke="rgba(215,222,240,.55)" stroke-width="1.300" stroke-linejoin="round"/><path d="M10.600 1.700v3.400a1.200 1.200 0 0 0 1.200 1.200h3.500" fill="none" stroke="rgba(215,222,240,.55)" stroke-width="1.300"/><path d="M4.300 16.200c1.500-1 3.200-3.700 4-6 .5-1.500.4-2.900-.3-2.900s-.9 1.300-.3 2.900c.8 2.200 2.900 4.600 5.300 4.700 1 .05 1-.9 0-1.100-2-.4-6 .700-8.700 2.400z" fill="none" stroke="rgba(215,222,240,.55)" stroke-width="1.100" stroke-linejoin="round"/></svg>
<svg class="a" style="left:1264.3px;top:953.45px;" width="19.3" height="22" viewBox="0 0 17.500 20"><path d="M3.500 1.500h7.300l4.700 4.700V17a1.500 1.500 0 0 1-1.500 1.500h-10.500A1.500 1.500 0 0 1 2 17V3a1.500 1.500 0 0 1 1.500-1.500z" fill="none" stroke="rgba(215,222,240,.55)" stroke-width="1.300" stroke-linejoin="round"/><path d="M10.600 1.700v3.400a1.200 1.200 0 0 0 1.200 1.200h3.500" fill="none" stroke="rgba(215,222,240,.55)" stroke-width="1.300"/><path d="M5 9.500h7.500M5 12.200h7.500M5 14.900h4.500" stroke="rgba(215,222,240,.55)" stroke-width="1.300" stroke-linecap="round"/></svg>
<span id="t65" class="t " style="top:1011.26px;font-size:18px;color:#7dd3fc;left:1016.00px;letter-spacing:-0.472px;">Here's why I always use a travel</span>
<span id="t66" class="t " style="top:1036.26px;font-size:18px;color:#7dd3fc;left:1016.00px;letter-spacing:0.067px;">router with my laptop on the go</span>
<svg class="a" style="left:1015.7px;top:1065.6px;" width="23.6" height="23.6" viewBox="0 0 16 16"><g fill="#b4b8bf" stroke="#b4b8bf" stroke-width="0.35" stroke-linejoin="round"><path d="M4.715 6.542 3.343 7.914a3 3 0 1 0 4.243 4.243l1.828-1.829A3 3 0 0 0 8.586 5.5L8 6.086a1 1 0 0 0-.154.199 2 2 0 0 1 .861 3.337L6.880 11.450a2 2 0 1 1-2.830-2.830l.793-.792a4 4 0 0 1-.128-1.287z"/><path d="M6.586 4.672A3 3 0 0 0 7.414 9.500l.775-.776a2 2 0 0 1-.896-3.346L9.120 3.550a2 2 0 1 1 2.830 2.830l-.793.792c.112.420.155.855.128 1.287l1.372-1.372a3 3 0 1 0-4.243-4.243z"/></g></svg>
<span id="t67" class="t " style="top:1069.46px;font-size:16px;color:#b9bdc4;left:1043.50px;letter-spacing:-0.647px;">www.xda-developers.com</span>
<div class="a" style="left:1001px;top:1104.25px;width:298px;height:1px;background:#3a3a3a;"></div>
<svg class="a" style="left:1015.7px;top:1115.5px;" width="23.6" height="23.6" viewBox="0 0 16 16"><g fill="#7dd3fc"><path d="M9.828 3h3.982a2 2 0 0 1 1.992 2.181l-.637 7A2 2 0 0 1 13.174 14H2.825a2 2 0 0 1-1.991-1.819l-.637-7a2 2 0 0 1 .342-1.310L.5 3a2 2 0 0 1 2-2h3.672a2 2 0 0 1 1.414.586l.828.828A2 2 0 0 0 9.828 3m-8.322.120q.322-.119.684-.120h5.396l-.707-.707A1 1 0 0 0 6.172 2H2.500a1 1 0 0 0-1 .981z"/></g></svg>
<span id="t68" class="t " style="top:1121.46px;font-size:16px;color:#c2c6cc;left:1043.50px;letter-spacing:-0.313px;">Portfolio of Work</span>
<svg class="a" style="left:1181.5px;top:1121px;" width="15.5" height="15.5" viewBox="0 0 16 16"><g fill="#c2c6cc"><path d="M14 0H2a2 2 0 0 0-2 2v12a2 2 0 0 0 2 2h12a2 2 0 0 0 2-2V2a2 2 0 0 0-2-2M1 3.857C1 3.384 1.448 3 2 3h12c.552 0 1 .384 1 .857v10.286c0 .473-.448.857-1 .857H2c-.552 0-1-.384-1-.857z"/><path d="M6.500 7a1 1 0 1 0 0-2 1 1 0 0 0 0 2m3 0a1 1 0 1 0 0-2 1 1 0 0 0 0 2m3 0a1 1 0 1 0 0-2 1 1 0 0 0 0 2m-9 3a1 1 0 1 0 0-2 1 1 0 0 0 0 2m3 0a1 1 0 1 0 0-2 1 1 0 0 0 0 2m3 0a1 1 0 1 0 0-2 1 1 0 0 0 0 2m3 0a1 1 0 1 0 0-2 1 1 0 0 0 0 2m-9 3a1 1 0 1 0 0-2 1 1 0 0 0 0 2m3 0a1 1 0 1 0 0-2 1 1 0 0 0 0 2m3 0a1 1 0 1 0 0-2 1 1 0 0 0 0 2"/></g></svg>
<span id="t69" class="t " style="top:1121.46px;font-size:16px;color:#c2c6cc;left:1202.00px;letter-spacing:-1.000px;">Jun 27, 2025</span>
<div class="a card" style="left:1325px;top:788.25px;width:300px;height:362.25px;"><div class="a" style="left:0;top:0;width:298px;height:200px;overflow:hidden;"><div style="width:298px;height:200px;background:#cfd0d1"></div></div></div>
<div class="a" style="left:1445px;top:858.75px;width:60px;height:60px;border-radius:8px;background:#8f9091;box-shadow:0 1px 3px rgba(0,0,0,.18);"><svg class="a" style="left:0;top:0" width="60" height="60" viewBox="0 0 60 60"><path d="M11 6.700h16v6.300h-9.500v21.300h9.500v18.200l-9-11.500h-7z" fill="#ee2f5c"/><path d="M33.300 6.700h15.700v34.300h-15.700v-6.700h9.200v-21.300h-9.200z" fill="#22a7ea"/></svg></div>
<div class="a" style="left:1533.9px;top:949.15px;width:80px;height:29.8px;background:rgba(43,43,43,.59);border-radius:8px;"></div>
<svg class="a" style="left:1539.3px;top:953.45px;" width="19.3" height="22" viewBox="0 0 17.500 20"><path d="M3.500 1.500h7.300l4.700 4.700V17a1.500 1.500 0 0 1-1.500 1.500h-10.500A1.500 1.500 0 0 1 2 17V3a1.500 1.500 0 0 1 1.500-1.500z" fill="none" stroke="rgba(215,222,240,.55)" stroke-width="1.300" stroke-linejoin="round"/><path d="M10.600 1.700v3.400a1.200 1.200 0 0 0 1.200 1.200h3.500" fill="none" stroke="rgba(215,222,240,.55)" stroke-width="1.300"/><circle cx="6.300" cy="7.800" r="1.700" fill="rgba(215,222,240,.55)"/><path d="M2.300 17.600v-3.300l3.200-2.700 2.800 2 3.600-3.400 3.400 2.600v4.800z" fill="rgba(215,222,240,.55)"/></svg>
<svg class="a" style="left:1564.3px;top:953.45px;" width="19.3" height="22" viewBox="0 0 17.500 20"><path d="M3.500 1.500h7.300l4.700 4.700V17a1.500 1.500 0 0 1-1.500 1.500h-10.500A1.500 1.500 0 0 1 2 17V3a1.500 1.500 0 0 1 1.500-1.500z" fill="none" stroke="rgba(215,222,240,.55)" stroke-width="1.300" stroke-linejoin="round"/><path d="M10.600 1.700v3.400a1.200 1.200 0 0 0 1.200 1.200h3.500" fill="none" stroke="rgba(215,222,240,.55)" stroke-width="1.300"/><path d="M4.300 16.200c1.500-1 3.200-3.700 4-6 .5-1.500.4-2.900-.3-2.900s-.9 1.300-.3 2.900c.8 2.200 2.900 4.600 5.300 4.700 1 .05 1-.9 0-1.100-2-.4-6 .700-8.700 2.400z" fill="none" stroke="rgba(215,222,240,.55)" stroke-width="1.100" stroke-linejoin="round"/></svg>
<svg class="a" style="left:1589.3px;top:953.45px;" width="19.3" height="22" viewBox="0 0 17.500 20"><path d="M3.500 1.500h7.300l4.700 4.700V17a1.500 1.500 0 0 1-1.500 1.500h-10.500A1.500 1.500 0 0 1 2 17V3a1.500 1.500 0 0 1 1.500-1.500z" fill="none" stroke="rgba(215,222,240,.55)" stroke-width="1.300" stroke-linejoin="round"/><path d="M10.600 1.700v3.400a1.200 1.200 0 0 0 1.200 1.200h3.500" fill="none" stroke="rgba(215,222,240,.55)" stroke-width="1.300"/><path d="M5 9.500h7.500M5 12.200h7.500M5 14.900h4.500" stroke="rgba(215,222,240,.55)" stroke-width="1.300" stroke-linecap="round"/></svg>
<span id="t70" class="t " style="top:1011.26px;font-size:18px;color:#7dd3fc;left:1341.00px;letter-spacing:-0.378px;">This free, self-hosted Zapier</span>
<span id="t71" class="t " style="top:1036.26px;font-size:18px;color:#7dd3fc;left:1341.00px;letter-spacing:-0.286px;">alternative is fantastic and...</span>
<svg class="a" style="left:1340.7px;top:1065.6px;" width="23.6" height="23.6" viewBox="0 0 16 16"><g fill="#b4b8bf" stroke="#b4b8bf" stroke-width="0.35" stroke-linejoin="round"><path d="M4.715 6.542 3.343 7.914a3 3 0 1 0 4.243 4.243l1.828-1.829A3 3 0 0 0 8.586 5.5L8 6.086a1 1 0 0 0-.154.199 2 2 0 0 1 .861 3.337L6.880 11.450a2 2 0 1 1-2.830-2.830l.793-.792a4 4 0 0 1-.128-1.287z"/><path d="M6.586 4.672A3 3 0 0 0 7.414 9.500l.775-.776a2 2 0 0 1-.896-3.346L9.120 3.550a2 2 0 1 1 2.830 2.830l-.793.792c.112.420.155.855.128 1.287l1.372-1.372a3 3 0 1 0-4.243-4.243z"/></g></svg>
<span id="t72" class="t " style="top:1069.46px;font-size:16px;color:#b9bdc4;left:1368.50px;letter-spacing:-0.647px;">www.xda-developers.com</span>
<div class="a" style="left:1326px;top:1104.25px;width:298px;height:1px;background:#3a3a3a;"></div>
<svg class="a" style="left:1340.7px;top:1115.5px;" width="23.6" height="23.6" viewBox="0 0 16 16"><g fill="#7dd3fc"><path d="M9.828 3h3.982a2 2 0 0 1 1.992 2.181l-.637 7A2 2 0 0 1 13.174 14H2.825a2 2 0 0 1-1.991-1.819l-.637-7a2 2 0 0 1 .342-1.310L.5 3a2 2 0 0 1 2-2h3.672a2 2 0 0 1 1.414.586l.828.828A2 2 0 0 0 9.828 3m-8.322.120q.322-.119.684-.120h5.396l-.707-.707A1 1 0 0 0 6.172 2H2.500a1 1 0 0 0-1 .981z"/></g></svg>
<span id="t73" class="t " style="top:1121.46px;font-size:16px;color:#c2c6cc;left:1368.50px;letter-spacing:-0.313px;">Portfolio of Work</span>
<svg class="a" style="left:1506.5px;top:1121px;" width="15.5" height="15.5" viewBox="0 0 16 16"><g fill="#c2c6cc"><path d="M14 0H2a2 2 0 0 0-2 2v12a2 2 0 0 0 2 2h12a2 2 0 0 0 2-2V2a2 2 0 0 0-2-2M1 3.857C1 3.384 1.448 3 2 3h12c.552 0 1 .384 1 .857v10.286c0 .473-.448.857-1 .857H2c-.552 0-1-.384-1-.857z"/><path d="M6.500 7a1 1 0 1 0 0-2 1 1 0 0 0 0 2m3 0a1 1 0 1 0 0-2 1 1 0 0 0 0 2m3 0a1 1 0 1 0 0-2 1 1 0 0 0 0 2m-9 3a1 1 0 1 0 0-2 1 1 0 0 0 0 2m3 0a1 1 0 1 0 0-2 1 1 0 0 0 0 2m3 0a1 1 0 1 0 0-2 1 1 0 0 0 0 2m3 0a1 1 0 1 0 0-2 1 1 0 0 0 0 2m-9 3a1 1 0 1 0 0-2 1 1 0 0 0 0 2m3 0a1 1 0 1 0 0-2 1 1 0 0 0 0 2m3 0a1 1 0 1 0 0-2 1 1 0 0 0 0 2"/></g></svg>
<span id="t74" class="t " style="top:1121.46px;font-size:16px;color:#c2c6cc;left:1527.00px;letter-spacing:-1.000px;">Jun 27, 2025</span>
<div class="a card" style="left:1650px;top:788.25px;width:300px;height:362.25px;"><div class="a" style="left:0;top:0;width:298px;height:200px;overflow:hidden;"><div style="width:298px;height:200px;background:#cfd0d1"></div></div></div>
<div class="a" style="left:1770px;top:858.75px;width:60px;height:60px;border-radius:8px;background:#8f9091;box-shadow:0 1px 3px rgba(0,0,0,.18);"><svg class="a" style="left:0;top:0" width="60" height="60" viewBox="0 0 60 60"><path d="M11 6.700h16v6.300h-9.500v21.300h9.500v18.200l-9-11.500h-7z" fill="#ee2f5c"/><path d="M33.300 6.700h15.700v34.300h-15.700v-6.700h9.200v-21.300h-9.200z" fill="#22a7ea"/></svg></div>
<div class="a" style="left:1858.9px;top:949.15px;width:80px;height:29.8px;background:rgba(43,43,43,.59);border-radius:8px;"></div>
<svg class="a" style="left:1864.3px;top:953.45px;" width="19.3" height="22" viewBox="0 0 17.500 20"><path d="M3.500 1.500h7.300l4.700 4.700V17a1.500 1.500 0 0 1-1.500 1.500h-10.500A1.500 1.500 0 0 1 2 17V3a1.500 1.500 0 0 1 1.500-1.500z" fill="none" stroke="rgba(215,222,240,.55)" stroke-width="1.300" stroke-linejoin="round"/><path d="M10.600 1.700v3.400a1.200 1.200 0 0 0 1.200 1.200h3.500" fill="none" stroke="rgba(215,222,240,.55)" stroke-width="1.300"/><circle cx="6.300" cy="7.800" r="1.700" fill="rgba(215,222,240,.55)"/><path d="M2.300 17.600v-3.300l3.200-2.700 2.800 2 3.600-3.400 3.400 2.600v4.800z" fill="rgba(215,222,240,.55)"/></svg>
<svg class="a" style="left:1889.3px;top:953.45px;" width="19.3" height="22" viewBox="0 0 17.500 20"><path d="M3.500 1.500h7.300l4.700 4.700V17a1.500 1.500 0 0 1-1.500 1.500h-10.500A1.500 1.500 0 0 1 2 17V3a1.500 1.500 0 0 1 1.500-1.500z" fill="none" stroke="rgba(215,222,240,.55)" stroke-width="1.300" stroke-linejoin="round"/><path d="M10.600 1.700v3.400a1.200 1.200 0 0 0 1.200 1.200h3.500" fill="none" stroke="rgba(215,222,240,.55)" stroke-width="1.300"/><path d="M4.300 16.200c1.500-1 3.200-3.700 4-6 .5-1.500.4-2.900-.3-2.900s-.9 1.300-.3 2.900c.8 2.200 2.900 4.600 5.300 4.700 1 .05 1-.9 0-1.100-2-.4-6 .700-8.700 2.400z" fill="none" stroke="rgba(215,222,240,.55)" stroke-width="1.100" stroke-linejoin="round"/></svg>
<svg class="a" style="left:1914.3px;top:953.45px;" width="19.3" height="22" viewBox="0 0 17.500 20"><path d="M3.500 1.500h7.300l4.700 4.700V17a1.500 1.500 0 0 1-1.500 1.500h-10.500A1.500 1.500 0 0 1 2 17V3a1.500 1.500 0 0 1 1.500-1.500z" fill="none" stroke="rgba(215,222,240,.55)" stroke-width="1.300" stroke-linejoin="round"/><path d="M10.600 1.700v3.400a1.200 1.200 0 0 0 1.200 1.200h3.500" fill="none" stroke="rgba(215,222,240,.55)" stroke-width="1.300"/><path d="M5 9.500h7.500M5 12.200h7.500M5 14.900h4.500" stroke="rgba(215,222,240,.55)" stroke-width="1.300" stroke-linecap="round"/></svg>
<span id="t75" class="t " style="top:1011.26px;font-size:18px;color:#7dd3fc;left:1666.00px;letter-spacing:-0.137px;">I didn't realize how useful this</span>
<span id="t76" class="t " style="top:1036.26px;font-size:18px;color:#7dd3fc;left:1666.00px;letter-spacing:-0.235px;">simple, free Obsidian plugin wou...</span>
<svg class="a" style="left:1665.7px;top:1065.6px;" width="23.6" height="23.6" viewBox="0 0 16 16"><g fill="#b4b8bf" stroke="#b4b8bf" stroke-width="0.35" stroke-linejoin="round"><path d="M4.715 6.542 3.343 7.914a3 3 0 1 0 4.243 4.243l1.828-1.829A3 3 0 0 0 8.586 5.5L8 6.086a1 1 0 0 0-.154.199 2 2 0 0 1 .861 3.337L6.880 11.450a2 2 0 1 1-2.830-2.830l.793-.792a4 4 0 0 1-.128-1.287z"/><path d="M6.586 4.672A3 3 0 0 0 7.414 9.500l.775-.776a2 2 0 0 1-.896-3.346L9.120 3.550a2 2 0 1 1 2.830 2.830l-.793.792c.112.420.155.855.128 1.287l1.372-1.372a3 3 0 1 0-4.243-4.243z"/></g></svg>
<span id="t77" class="t " style="top:1069.46px;font-size:16px;color:#b9bdc4;left:1693.50px;letter-spacing:-0.647px;">www.xda-developers.com</span>
<div class="a" style="left:1651px;top:1104.25px;width:298px;height:1px;background:#3a3a3a;"></div>
<svg class="a" style="left:1665.7px;top:1115.5px;" width="23.6" height="23.6" viewBox="0 0 16 16"><g fill="#7dd3fc"><path d="M9.828 3h3.982a2 2 0 0 1 1.992 2.181l-.637 7A2 2 0 0 1 13.174 14H2.825a2 2 0 0 1-1.991-1.819l-.637-7a2 2 0 0 1 .342-1.310L.5 3a2 2 0 0 1 2-2h3.672a2 2 0 0 1 1.414.586l.828.828A2 2 0 0 0 9.828 3m-8.322.120q.322-.119.684-.120h5.396l-.707-.707A1 1 0 0 0 6.172 2H2.500a1 1 0 0 0-1 .981z"/></g></svg>
<span id="t78" class="t " style="top:1121.46px;font-size:16px;color:#c2c6cc;left:1693.50px;letter-spacing:-0.313px;">Portfolio of Work</span>
<svg class="a" style="left:1831.5px;top:1121px;" width="15.5" height="15.5" viewBox="0 0 16 16"><g fill="#c2c6cc"><path d="M14 0H2a2 2 0 0 0-2 2v12a2 2 0 0 0 2 2h12a2 2 0 0 0 2-2V2a2 2 0 0 0-2-2M1 3.857C1 3.384 1.448 3 2 3h12c.552 0 1 .384 1 .857v10.286c0 .473-.448.857-1 .857H2c-.552 0-1-.384-1-.857z"/><path d="M6.500 7a1 1 0 1 0 0-2 1 1 0 0 0 0 2m3 0a1 1 0 1 0 0-2 1 1 0 0 0 0 2m3 0a1 1 0 1 0 0-2 1 1 0 0 0 0 2m-9 3a1 1 0 1 0 0-2 1 1 0 0 0 0 2m3 0a1 1 0 1 0 0-2 1 1 0 0 0 0 2m3 0a1 1 0 1 0 0-2 1 1 0 0 0 0 2m3 0a1 1 0 1 0 0-2 1 1 0 0 0 0 2m-9 3a1 1 0 1 0 0-2 1 1 0 0 0 0 2m3 0a1 1 0 1 0 0-2 1 1 0 0 0 0 2m3 0a1 1 0 1 0 0-2 1 1 0 0 0 0 2"/></g></svg>
<span id="t79" class="t " style="top:1121.46px;font-size:16px;color:#c2c6cc;left:1852.00px;letter-spacing:-1.000px;">Jun 27, 2025</span>
<div class="a card" style="left:1975px;top:788.25px;width:300px;height:362.25px;"><div class="a" style="left:0;top:0;width:298px;height:200px;overflow:hidden;"><div style="width:298px;height:200px;background:#cfd0d1"></div></div></div>
<div class="a" style="left:2095px;top:858.75px;width:60px;height:60px;border-radius:8px;background:#8f9091;box-shadow:0 1px 3px rgba(0,0,0,.18);"><svg class="a" style="left:0;top:0" width="60" height="60" viewBox="0 0 60 60"><path d="M11 6.700h16v6.300h-9.500v21.300h9.500v18.200l-9-11.500h-7z" fill="#ee2f5c"/><path d="M33.300 6.700h15.700v34.300h-15.700v-6.700h9.200v-21.300h-9.200z" fill="#22a7ea"/></svg></div>
<div class="a" style="left:2183.9px;top:949.15px;width:80px;height:29.8px;background:rgba(43,43,43,.59);border-radius:8px;"></div>
<svg class="a" style="left:2189.3px;top:953.45px;" width="19.3" height="22" viewBox="0 0 17.500 20"><path d="M3.500 1.500h7.300l4.700 4.700V17a1.500 1.500 0 0 1-1.500 1.500h-10.500A1.500 1.500 0 0 1 2 17V3a1.500 1.500 0 0 1 1.500-1.500z" fill="none" stroke="rgba(215,222,240,.55)" stroke-width="1.300" stroke-linejoin="round"/><path d="M10.600 1.700v3.400a1.200 1.200 0 0 0 1.200 1.200h3.500" fill="none" stroke="rgba(215,222,240,.55)" stroke-width="1.300"/><circle cx="6.300" cy="7.800" r="1.700" fill="rgba(215,222,240,.55)"/><path d="M2.300 17.600v-3.300l3.200-2.700 2.800 2 3.600-3.400 3.400 2.600v4.800z" fill="rgba(215,222,240,.55)"/></svg>
<svg class="a" style="left:2214.3px;top:953.45px;" width="19.3" height="22" viewBox="0 0 17.500 20"><path d="M3.500 1.500h7.300l4.700 4.700V17a1.500 1.500 0 0 1-1.500 1.500h-10.500A1.500 1.500 0 0 1 2 17V3a1.500 1.500 0 0 1 1.500-1.500z" fill="none" stroke="rgba(215,222,240,.55)" stroke-width="1.300" stroke-linejoin="round"/><path d="M10.600 1.700v3.400a1.200 1.200 0 0 0 1.200 1.200h3.500" fill="none" stroke="rgba(215,222,240,.55)" stroke-width="1.300"/><path d="M4.300 16.200c1.500-1 3.200-3.700 4-6 .5-1.500.4-2.900-.3-2.900s-.9 1.300-.3 2.900c.8 2.200 2.900 4.600 5.300 4.700 1 .05 1-.9 0-1.100-2-.4-6 .700-8.700 2.400z" fill="none" stroke="rgba(215,222,240,.55)" stroke-width="1.100" stroke-linejoin="round"/></svg>
<svg class="a" style="left:2239.3px;top:953.45px;" width="19.3" height="22" viewBox="0 0 17.500 20"><path d="M3.500 1.500h7.300l4.700 4.700V17a1.500 1.500 0 0 1-1.500 1.500h-10.500A1.500 1.500 0 0 1 2 17V3a1.500 1.500 0 0 1 1.500-1.500z" fill="none" stroke="rgba(215,222,240,.55)" stroke-width="1.300" stroke-linejoin="round"/><path d="M10.600 1.700v3.400a1.200 1.200 0 0 0 1.200 1.200h3.500" fill="none" stroke="rgba(215,222,240,.55)" stroke-width="1.300"/><path d="M5 9.500h7.500M5 12.200h7.500M5 14.900h4.500" stroke="rgba(215,222,240,.55)" stroke-width="1.300" stroke-linecap="round"/></svg>
<span id="t80" class="t " style="top:1011.26px;font-size:18px;color:#7dd3fc;left:1991.00px;letter-spacing:-0.200px;">This open-source tool brings</span>
<span id="t81" class="t " style="top:1036.26px;font-size:18px;color:#7dd3fc;left:1991.00px;letter-spacing:-0.200px;">the Windows desktop experien...</span>
<svg class="a" style="left:1990.7px;top:1065.6px;" width="23.6" height="23.6" viewBox="0 0 16 16"><g fill="#b4b8bf" stroke="#b4b8bf" stroke-width="0.35" stroke-linejoin="round"><path d="M4.715 6.542 3.343 7.914a3 3 0 1 0 4.243 4.243l1.828-1.829A3 3 0 0 0 8.586 5.5L8 6.086a1 1 0 0 0-.154.199 2 2 0 0 1 .861 3.337L6.880 11.450a2 2 0 1 1-2.830-2.830l.793-.792a4 4 0 0 1-.128-1.287z"/><path d="M6.586 4.672A3 3 0 0 0 7.414 9.500l.775-.776a2 2 0 0 1-.896-3.346L9.120 3.550a2 2 0 1 1 2.830 2.830l-.793.792c.112.420.155.855.128 1.287l1.372-1.372a3 3 0 1 0-4.243-4.243z"/></g></svg>
<span id="t82" class="t " style="top:1069.46px;font-size:16px;color:#b9bdc4;left:2018.50px;letter-spacing:-0.647px;">www.xda-developers.com</span>
<div class="a" style="left:1976px;top:1104.25px;width:298px;height:1px;background:#3a3a3a;"></div>
<svg class="a" style="left:1990.7px;top:1115.5px;" width="23.6" height="23.6" viewBox="0 0 16 16"><g fill="#7dd3fc"><path d="M9.828 3h3.982a2 2 0 0 1 1.992 2.181l-.637 7A2 2 0 0 1 13.174 14H2.825a2 2 0 0 1-1.991-1.819l-.637-7a2 2 0 0 1 .342-1.310L.5 3a2 2 0 0 1 2-2h3.672a2 2 0 0 1 1.414.586l.828.828A2 2 0 0 0 9.828 3m-8.322.120q.322-.119.684-.120h5.396l-.707-.707A1 1 0 0 0 6.172 2H2.500a1 1 0 0 0-1 .981z"/></g></svg>
<span id="t83" class="t " style="top:1121.46px;font-size:16px;color:#c2c6cc;left:2018.50px;letter-spacing:-0.313px;">Portfolio of Work</span>
<svg class="a" style="left:2156.5px;top:1121px;" width="15.5" height="15.5" viewBox="0 0 16 16"><g fill="#c2c6cc"><path d="M14 0H2a2 2 0 0 0-2 2v12a2 2 0 0 0 2 2h12a2 2 0 0 0 2-2V2a2 2 0 0 0-2-2M1 3.857C1 3.384 1.448 3 2 3h12c.552 0 1 .384 1 .857v10.286c0 .473-.448.857-1 .857H2c-.552 0-1-.384-1-.857z"/><path d="M6.500 7a1 1 0 1 0 0-2 1 1 0 0 0 0 2m3 0a1 1 0 1 0 0-2 1 1 0 0 0 0 2m3 0a1 1 0 1 0 0-2 1 1 0 0 0 0 2m-9 3a1 1 0 1 0 0-2 1 1 0 0 0 0 2m3 0a1 1 0 1 0 0-2 1 1 0 0 0 0 2m3 0a1 1 0 1 0 0-2 1 1 0 0 0 0 2m3 0a1 1 0 1 0 0-2 1 1 0 0 0 0 2m-9 3a1 1 0 1 0 0-2 1 1 0 0 0 0 2m3 0a1 1 0 1 0 0-2 1 1 0 0 0 0 2m3 0a1 1 0 1 0 0-2 1 1 0 0 0 0 2"/></g></svg>
<span id="t84" class="t " style="top:1121.46px;font-size:16px;color:#c2c6cc;left:2177.00px;letter-spacing:-1.000px;">Jun 27, 2025</span>
<div class="a" style="left:2116px;top:76px;width:5px;height:1117px;background:#171717;"></div>
<svg class="a" style="left:1901.8px;top:1109px;" width="200" height="60" viewBox="0 0 200 60"><g opacity=".6"><path d="M0 0h19.300v7.400h-11.300v26.600h11.300v22.800l-8.100-15.100h-11.200z" fill="#c8335f"/><path d="M27.600 0h18.800v41.700h-18.800v-7.700h10.800v-26.600h-10.800z" fill="#1f88c8"/></g><text x="55.500" y="41.700" font-family="Liberation Sans, sans-serif" font-weight="700" font-size="58" fill="#b5b5b5" fill-opacity=".8" textLength="141" lengthAdjust="spacingAndGlyphs">XDA</text></svg>
</div></body></html>
